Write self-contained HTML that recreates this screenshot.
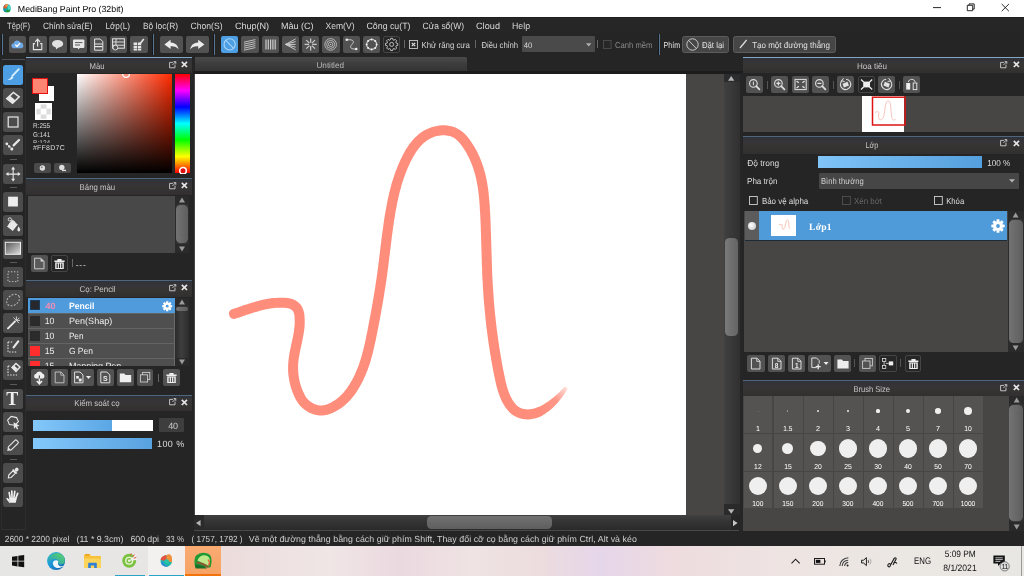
<!DOCTYPE html>
<html lang="vi"><head><meta charset="utf-8"><title>MediBang Paint Pro (32bit)</title>
<style>
*{box-sizing:border-box;margin:0;padding:0}
html,body{width:1024px;height:576px;overflow:hidden;background:#252525}
body{position:relative;font-family:"Liberation Sans",sans-serif;font-size:9px;color:#ddd}
div,svg{position:absolute;display:block}
svg{overflow:visible}
svg{will-change:transform}
svg.t text{white-space:pre;text-rendering:geometricPrecision}

.b{background:#525252;border-radius:2px}
.bd{background:#262626;border-radius:2px;border:1px solid #454545}

.pt{background:linear-gradient(#2e3238 0,#343438 3px,#373434 8px,#312f2f 100%);border-top:1px solid #4e667e}
.pt.hi{border-top-color:#84a6c2}

</style></head><body>
<div style="left:0px;top:0px;width:1024px;height:17px;background:#ffffff;"></div>
<svg style="left:3.3px;top:3.7px;" width="8" height="8.6" viewBox="0 0 8 8.6"><defs><clipPath id="ic"><ellipse cx="4" cy="4.400" rx="3.700" ry="4.100"/></clipPath></defs>
<g clip-path="url(#ic)"><rect width="8" height="8.600" fill="#14b09c"/>
<path d="M0 0h5.200L3.600 4.600H0z" fill="#d85a34"/><path d="M2.600 0h3l-1 2.400l-2.600.4z" fill="#f09a50"/>
<path d="M4.400 1.600h3.600v4L5 5.400z" fill="#4ad8cc"/>
<path d="M1.600 6.600L5 5.800l3 1v1.800H1.600z" fill="#1f9a3c"/>
<path d="M0 4.400l2.400.6l.4 2.600L0 8.600z" fill="#1a8fb4"/></g></svg>
<svg class="t" style="left:17px;top:12px;" width="1" height="1"><text x="0.8" y="0" font-family="Liberation Sans,sans-serif" font-size="8.8" letter-spacing="0.002" fill="#000">MediBang Paint Pro (32bit)</text></svg>
<svg style="left:928px;top:0px;" width="96" height="17" viewBox="0 0 96 17"><g stroke="#111" stroke-width="0.9" fill="none">
<path d="M5 7.6H13"/>
<path d="M39.3 5.3h5.4v5.4h-5.4z"/><path d="M41 5.3V3.9h5.2v5.2h-1.5"/>
<path d="M73.7 4l7.2 7.2M80.9 4l-7.2 7.2"/></g></svg>
<div style="left:0px;top:17px;width:1024px;height:16px;background:#262626;"></div>
<div style="left:0px;top:17px;width:1024px;height:1px;background:#1f1f1f;"></div>
<svg class="t" style="left:7px;top:29px;" width="1" height="1"><text x="0.1" y="0" font-family="Liberation Sans,sans-serif" font-size="9.1" textLength="22.9" lengthAdjust="spacingAndGlyphs" fill="#d8d8d8">Tệp(F)</text></svg>
<svg class="t" style="left:43px;top:29px;" width="1" height="1"><text x="0.1" y="0" font-family="Liberation Sans,sans-serif" font-size="9.1" textLength="49.4" lengthAdjust="spacingAndGlyphs" fill="#d8d8d8">Chỉnh sửa(E)</text></svg>
<svg class="t" style="left:105px;top:29px;" width="1" height="1"><text x="0.4" y="0" font-family="Liberation Sans,sans-serif" font-size="9.1" textLength="24.6" lengthAdjust="spacingAndGlyphs" fill="#d8d8d8">Lớp(L)</text></svg>
<svg class="t" style="left:143px;top:29px;" width="1" height="1"><text x="0" y="0" font-family="Liberation Sans,sans-serif" font-size="9.1" textLength="35" lengthAdjust="spacingAndGlyphs" fill="#d8d8d8">Bộ lọc(R)</text></svg>
<svg class="t" style="left:190px;top:29px;" width="1" height="1"><text x="0.5" y="0" font-family="Liberation Sans,sans-serif" font-size="9.1" textLength="32" lengthAdjust="spacingAndGlyphs" fill="#d8d8d8">Chọn(S)</text></svg>
<svg class="t" style="left:235px;top:29px;" width="1" height="1"><text x="0" y="0" font-family="Liberation Sans,sans-serif" font-size="9.1" letter-spacing="-0.065" fill="#d8d8d8">Chụp(N)</text></svg>
<svg class="t" style="left:281px;top:29px;" width="1" height="1"><text x="0" y="0" font-family="Liberation Sans,sans-serif" font-size="9.1" letter-spacing="-0.061" fill="#d8d8d8">Màu (C)</text></svg>
<svg class="t" style="left:325px;top:29px;" width="1" height="1"><text x="0.5" y="0" font-family="Liberation Sans,sans-serif" font-size="9.1" textLength="29" lengthAdjust="spacingAndGlyphs" fill="#d8d8d8">Xem(V)</text></svg>
<svg class="t" style="left:366px;top:29px;" width="1" height="1"><text x="0.5" y="0" font-family="Liberation Sans,sans-serif" font-size="9.1" textLength="44" lengthAdjust="spacingAndGlyphs" fill="#d8d8d8">Công cụ(T)</text></svg>
<svg class="t" style="left:422px;top:29px;" width="1" height="1"><text x="0.5" y="0" font-family="Liberation Sans,sans-serif" font-size="9.1" textLength="41.5" lengthAdjust="spacingAndGlyphs" fill="#d8d8d8">Cửa sổ(W)</text></svg>
<svg class="t" style="left:476px;top:29px;" width="1" height="1"><text x="0" y="0" font-family="Liberation Sans,sans-serif" font-size="9.1" letter-spacing="0.056" fill="#d8d8d8">Cloud</text></svg>
<svg class="t" style="left:512px;top:29px;" width="1" height="1"><text x="0" y="0" font-family="Liberation Sans,sans-serif" font-size="9.1" textLength="18" lengthAdjust="spacingAndGlyphs" fill="#d8d8d8">Help</text></svg>
<div style="left:0px;top:33px;width:1024px;height:24px;background:#252525;"></div>
<div style="left:1px;top:33.5px;width:1.2px;height:21.5px;background:#15191d;"></div>
<div style="left:2.2px;top:33.5px;width:1px;height:21.5px;background:#58748e;"></div>
<div style="left:152.1px;top:33.5px;width:1.2px;height:21.5px;background:#15191d;"></div>
<div style="left:153.3px;top:33.5px;width:1px;height:21.5px;background:#58748e;"></div>
<div style="left:213px;top:33.5px;width:1.2px;height:21.5px;background:#15191d;"></div>
<div style="left:214.2px;top:33.5px;width:1px;height:21.5px;background:#58748e;"></div>
<div style="left:658px;top:33.5px;width:1.2px;height:21.5px;background:#15191d;"></div>
<div style="left:659.2px;top:33.5px;width:1px;height:21.5px;background:#58748e;"></div>
<div class="b" style="left:9px;top:36.2px;width:17.3px;height:16.8px;"></div>
<svg style="left:9px;top:36.2px;" width="17.3" height="16.8" viewBox="0 0 17.3 16.8"><path d="M4.3 12.3a2.6 2.6 0 0 1 .3-5.1a3.6 3.6 0 0 1 6.8-.6a3 3 0 0 1 1.3 5.7z" fill="#6fa9e6"/><path d="M6.3 8.8l1.7 1.7l3-3.4" stroke="#fff" stroke-width="1.3" fill="none"/></svg>
<div class="b" style="left:29.23px;top:36.2px;width:17.3px;height:16.8px;"></div>
<svg style="left:29.23px;top:36.2px;" width="17.3" height="16.8" viewBox="0 0 17.3 16.8"><path d="M6 7.6H4.4v6h8.4v-6H11.2" stroke="#e6e6e6" fill="none" stroke-width="1.1"/><path d="M8.6 10.6V3.6M6.2 5.8l2.4-2.6l2.4 2.6" stroke="#e6e6e6" fill="none" stroke-width="1.2"/></svg>
<div class="b" style="left:49.46px;top:36.2px;width:17.3px;height:16.8px;"></div>
<svg style="left:49.46px;top:36.2px;" width="17.3" height="16.8" viewBox="0 0 17.3 16.8"><ellipse cx="8.6" cy="7.8" rx="5.6" ry="3.9" fill="#e2e2e2"/><path d="M6.6 10.6l.6 3l2.6-2.6z" fill="#e2e2e2"/></svg>
<div class="b" style="left:69.69px;top:36.2px;width:17.3px;height:16.8px;"></div>
<svg style="left:69.69px;top:36.2px;" width="17.3" height="16.8" viewBox="0 0 17.3 16.8"><rect x="3" y="3.6" width="11.4" height="8.4" rx="1" fill="#e6e6e6"/><path d="M7.6 12l1 1.6l1-1.6z" fill="#e6e6e6"/><path d="M5 6.6h7.4M5 9h5" stroke="#555" stroke-width="1"/></svg>
<div class="b" style="left:89.92px;top:36.2px;width:17.3px;height:16.8px;"></div>
<svg style="left:89.92px;top:36.2px;" width="17.3" height="16.8" viewBox="0 0 17.3 16.8"><path d="M4.6 3h5.6l2.6 2.6v8.6H4.6z" stroke="#e6e6e6" fill="none" stroke-width="1"/><path d="M5 8h7.4M5 10.6h7.4" stroke="#e6e6e6" fill="none" stroke-width="1.2"/></svg>
<div class="b" style="left:110.15px;top:36.2px;width:17.3px;height:16.8px;"></div>
<svg style="left:110.15px;top:36.2px;" width="17.3" height="16.8" viewBox="0 0 17.3 16.8"><rect x="2.6" y="2.8" width="11.8" height="9.4" stroke="#e6e6e6" fill="none" stroke-width="1"/><path d="M2.6 6h11.8M2.6 9.2h11.8M6 2.8V9" stroke="#e6e6e6" fill="none" stroke-width=".9"/><circle cx="5.4" cy="11.6" r="2.4" fill="#525252" stroke="#e6e6e6" stroke-width=".9"/></svg>
<div class="b" style="left:130.38px;top:36.2px;width:17.3px;height:16.8px;"></div>
<svg style="left:130.38px;top:36.2px;" width="17.3" height="16.8" viewBox="0 0 17.3 16.8"><path d="M3.6 6.4h3.4v2.6H3.6zM7.8 6.4h3.4v2.6H7.8zM3.6 9.8h3.4v2.6H3.6zM7.8 9.8h3.4v2.6H7.8zM3.6 13h3.4v1.6H3.6zM7.8 13h3.4v1.6H7.8z" fill="#e6e6e6"/><path d="M10.2 7.4l3.6-4.4" stroke="#e6e6e6" stroke-width="1.6"/></svg>
<div class="b" style="left:160px;top:36.2px;width:22.8px;height:16.8px;"></div>
<svg style="left:160px;top:36.2px;" width="22.8" height="16.8" viewBox="0 0 22.8 16.8"><path d="M4.4 8.4l6.2-4.6v2.6c5.4.4 7.6 3.6 8 7c-1.8-2.6-4.2-3.4-8-3.2v2.8z" fill="#ededed"/></svg>
<div class="b" style="left:186.3px;top:36.2px;width:22.8px;height:16.8px;"></div>
<svg style="left:186.3px;top:36.2px;" width="22.8" height="16.8" viewBox="0 0 22.8 16.8"><path d="M18.4 8.4l-6.2-4.6v2.6c-5.4.4-7.6 3.6-8 7c1.8-2.6 4.2-3.4 8-3.2v2.8z" fill="#ededed"/></svg>
<div class="b" style="left:221px;top:36.2px;width:17.3px;height:16.8px;background:#4d9ee3"></div>
<svg style="left:221px;top:36.2px;" width="17.3" height="16.8" viewBox="0 0 17.3 16.8"><circle cx="8.65" cy="8.4" r="5.6" stroke="#a8d4fa" stroke-width="1.1" fill="none"/><path d="M4.8 4.4l7.8 8" stroke="#a8d4fa" stroke-width="1.1"/></svg>
<div class="b" style="left:241.25px;top:36.2px;width:17.3px;height:16.8px;"></div>
<svg style="left:241.25px;top:36.2px;" width="17.3" height="16.8" viewBox="0 0 17.3 16.8"><path d="M3 6.2l11.4-2.6M3 8.2l11.4-2.6M3 10.2l11.4-2.6M3 12.2l11.4-2.6M3 14.2l11.4-2.6" stroke="#cccccc" fill="none" stroke-width=".9"/></svg>
<div class="b" style="left:261.5px;top:36.2px;width:17.3px;height:16.8px;"></div>
<svg style="left:261.5px;top:36.2px;" width="17.3" height="16.8" viewBox="0 0 17.3 16.8"><path d="M4 3.6v10M6.3 3.6v10M8.6 3.6v10M10.9 3.6v10M13.2 3.6v10" stroke="#cccccc" fill="none" stroke-width="1.2"/></svg>
<div class="b" style="left:281.75px;top:36.2px;width:17.3px;height:16.8px;"></div>
<svg style="left:281.75px;top:36.2px;" width="17.3" height="16.8" viewBox="0 0 17.3 16.8"><path d="M3.6 8.4L13.6 3M3.6 8.4L13.6 5.6M3.6 8.4h10M3.6 8.4L13.6 11.2M3.6 8.4L13.6 13.8" stroke="#cccccc" fill="none" stroke-width="1"/></svg>
<div class="b" style="left:302px;top:36.2px;width:17.3px;height:16.8px;"></div>
<svg style="left:302px;top:36.2px;" width="17.3" height="16.8" viewBox="0 0 17.3 16.8"><path d="M8.65 2.400v4.400M8.65 10v4.400M2.600 8.400h4.400M10.300 8.400h4.400M4.300 4.100l3.100 3.100M9.900 9.600l3.100 3.100M13 4.100l-3.100 3.100M7.400 9.600l-3.100 3.100" stroke="#cccccc" fill="none" stroke-width="1.200"/></svg>
<div class="b" style="left:322.25px;top:36.2px;width:17.3px;height:16.8px;"></div>
<svg style="left:322.25px;top:36.2px;" width="17.3" height="16.8" viewBox="0 0 17.3 16.8"><circle cx="8.65" cy="8.4" r="5.8" stroke="#cccccc" fill="none" stroke-width=".8"/><circle cx="8.65" cy="8.4" r="4" stroke="#cccccc" fill="none" stroke-width=".8"/><circle cx="8.65" cy="8.4" r="2.2" stroke="#cccccc" fill="none" stroke-width=".8"/><circle cx="8.65" cy="8.4" r=".6" fill="#d4d4d4"/></svg>
<div class="b" style="left:342.5px;top:36.2px;width:17.3px;height:16.8px;"></div>
<svg style="left:342.5px;top:36.2px;" width="17.3" height="16.8" viewBox="0 0 17.3 16.8"><path d="M4 3.8c6-.6 8 1.6 5 4.600c-3 3-1 5 4 4.600" stroke="#cccccc" fill="none" stroke-width="1"/><circle cx="3.8" cy="3.8" r="1.3" fill="#eee"/><circle cx="13.2" cy="13" r="1.3" fill="#eee"/></svg>
<div class="b" style="left:362.75px;top:36.2px;width:17.3px;height:16.8px;"></div>
<svg style="left:362.75px;top:36.2px;" width="17.3" height="16.8" viewBox="0 0 17.3 16.8"><circle cx="8.65" cy="8.4" r="5" stroke="#cccccc" fill="none" stroke-width="1.1"/><g fill="#eee"><circle cx="8.65" cy="3.4" r="1"/><circle cx="8.65" cy="13.4" r="1"/><circle cx="3.65" cy="8.4" r="1"/><circle cx="13.65" cy="8.4" r="1"/><circle cx="5.1" cy="4.9" r="1"/><circle cx="12.2" cy="4.9" r="1"/><circle cx="5.1" cy="11.9" r="1"/><circle cx="12.2" cy="11.9" r="1"/></g></svg>
<div class="bd" style="left:383px;top:36.2px;width:17.3px;height:16.8px;"></div>
<svg style="left:383px;top:36.2px;" width="17.3" height="16.8" viewBox="0 0 17.3 16.8"><path d="M13.15 7.04L14.77 7.43L14.77 9.37L13.15 9.76L12.80 10.62L13.67 12.04L12.29 13.42L10.87 12.55L10.01 12.90L9.62 14.52L7.68 14.52L7.29 12.90L6.43 12.55L5.01 13.42L3.63 12.04L4.50 10.62L4.15 9.76L2.53 9.37L2.53 7.43L4.15 7.04L4.50 6.18L3.63 4.76L5.01 3.38L6.43 4.25L7.29 3.90L7.68 2.28L9.62 2.28L10.01 3.90L10.87 4.25L12.29 3.38L13.67 4.76L12.80 6.18Z" stroke="#cfcfcf" stroke-width=".9" fill="none" stroke-linejoin="round"/><circle cx="8.65" cy="8.4" r="2" stroke="#cfcfcf" stroke-width=".9" fill="none"/></svg>
<div style="left:404.2px;top:40.4px;width:0.9px;height:8px;background:#666;"></div>
<div style="left:475.4px;top:40.4px;width:0.9px;height:8px;background:#666;"></div>
<div style="left:597.4px;top:40.4px;width:0.9px;height:8px;background:#666;"></div>
<svg style="left:409px;top:40.3px;" width="9" height="9" viewBox="0 0 9 9"><rect x=".5" y=".5" width="8" height="8" fill="#2a2a2a" stroke="#c8c8c8" stroke-width=".9"/><path d="M2.8 2.8l3.4 3.4M6.2 2.8L2.8 6.200" stroke="#e4e4e4" stroke-width="1.1"/></svg>
<svg class="t" style="left:421px;top:48px;" width="1" height="1"><text x="0.5" y="0" font-family="Liberation Sans,sans-serif" font-size="8.6" textLength="48.5" lengthAdjust="spacingAndGlyphs" fill="#d4d4d4">Khử răng cưa</text></svg>
<svg class="t" style="left:481px;top:48px;" width="1" height="1"><text x="0.5" y="0" font-family="Liberation Sans,sans-serif" font-size="8.6" textLength="36.5" lengthAdjust="spacingAndGlyphs" fill="#d4d4d4">Điều chỉnh</text></svg>
<div style="left:522px;top:36.2px;width:73.2px;height:16px;background:#4a4a4a;border-radius:1px"></div>
<svg class="t" style="left:523px;top:48px;" width="1" height="1"><text x="0.7" y="0" font-family="Liberation Sans,sans-serif" font-size="8" textLength="8.6" lengthAdjust="spacingAndGlyphs" fill="#ddd">40</text></svg>
<svg style="left:586.2px;top:42.8px;" width="5.4" height="3.6" viewBox="0 0 5.4 3.6"><path d="M0 .2h5.400L2.700 3.400z" fill="#b0b0b0"/></svg>
<svg style="left:602.5px;top:40.3px;" width="9" height="9" viewBox="0 0 9 9"><rect x=".5" y=".5" width="7.6" height="8" fill="#272727" stroke="#4e4e4e" stroke-width=".9"/></svg>
<svg class="t" style="left:615px;top:48px;" width="1" height="1"><text x="0" y="0" font-family="Liberation Sans,sans-serif" font-size="8.6" textLength="37.5" lengthAdjust="spacingAndGlyphs" fill="#8a8a8a">Canh mềm</text></svg>
<svg class="t" style="left:663px;top:48px;" width="1" height="1"><text x="0.6" y="0" font-family="Liberation Sans,sans-serif" font-size="8.6" textLength="16.4" lengthAdjust="spacingAndGlyphs" fill="#e6e6e6">Phím</text></svg>
<div style="left:682.3px;top:36px;width:47.2px;height:17.2px;background:#464646;border:1px solid #5c5c5c;border-radius:2.500px"></div>
<svg style="left:686px;top:38.2px;" width="13" height="13" viewBox="0 0 13 13"><circle cx="6.5" cy="6.5" r="5.7" stroke="#d8d8d8" stroke-width=".9" fill="none"/><path d="M2.600 2.400l7.800 8.200" stroke="#d8d8d8" stroke-width=".9"/></svg>
<svg class="t" style="left:701px;top:48px;" width="1" height="1"><text x="0.9" y="0" font-family="Liberation Sans,sans-serif" font-size="8.6" textLength="22.1" lengthAdjust="spacingAndGlyphs" fill="#e0e0e0">Đặt lại</text></svg>
<div style="left:733px;top:36px;width:103px;height:17.2px;background:#464646;border:1px solid #5c5c5c;border-radius:2.500px"></div>
<svg style="left:739px;top:39px;" width="9" height="10" viewBox="0 0 9 10"><path d="M1 9L7.600 1" stroke="#e0e0e0" stroke-width="1.2"/></svg>
<svg class="t" style="left:752px;top:48px;" width="1" height="1"><text x="0.2" y="0" font-family="Liberation Sans,sans-serif" font-size="8.6" textLength="77.8" lengthAdjust="spacingAndGlyphs" fill="#e0e0e0">Tạo một đường thẳng</text></svg>
<div style="left:0px;top:57px;width:26px;height:474px;background:#252525;"></div>
<div style="left:2px;top:58.6px;width:23px;height:1px;background:#4a4f55;"></div>
<div style="left:0.5px;top:60px;width:1px;height:470px;background:#2c2c2c;"></div>
<div style="left:24.6px;top:60px;width:1px;height:470px;background:#2c2c2c;"></div>
<div style="left:0.5px;top:529.4px;width:25px;height:1px;background:#303030;"></div>
<div class="b" style="left:2.9px;top:65px;width:20.3px;height:20.2px;background:#4d9ee3;border-radius:2.500px"></div>
<svg style="left:2.9px;top:65px;" width="20.3" height="20.2" viewBox="0 0 20.3 20.2"><path d="M15.8 4.200L9.400 10.800" stroke="#d6efff" stroke-width="1.9" stroke-linecap="round"/><path d="M4.400 14.800c2.200-.2 3.200-2.200 4.400-3.800l1.800 1.600c-1.200 1.800-3.600 3.200-6.200 2.200z" fill="#d6efff"/></svg>
<div class="b" style="left:2.9px;top:88.3px;width:20.3px;height:20.2px;background:#4c4c4c;border-radius:2.500px"></div>
<svg style="left:2.9px;top:88.3px;" width="20.3" height="20.2" viewBox="0 0 20.3 20.2"><path d="M3.800 10.600l6.600-6.200l5.800 4.400l-6.600 6.400z" stroke="#e8e8e8" fill="none" stroke-width="1.5"/><path d="M4.200 11l3.200-3l5.200 4.400l-3 3z" fill="#e8e8e8"/></svg>
<div class="b" style="left:2.9px;top:111.8px;width:20.3px;height:20.2px;background:#4c4c4c;border-radius:2.500px"></div>
<svg style="left:2.9px;top:111.8px;" width="20.3" height="20.2" viewBox="0 0 20.3 20.2"><rect x="5.200" y="5" width="9.800" height="10" stroke="#e8e8e8" fill="none" stroke-width="1.2"/></svg>
<div class="b" style="left:2.9px;top:135.2px;width:20.3px;height:20.2px;background:#4c4c4c;border-radius:2.500px"></div>
<svg style="left:2.9px;top:135.2px;" width="20.3" height="20.2" viewBox="0 0 20.3 20.2"><path d="M16 5L10.600 10.400" stroke="#e8e8e8" stroke-width="2.200" stroke-linecap="round"/><path d="M3.600 8.800l5 5" stroke="#ccc" stroke-width=".8"/><circle cx="3.800" cy="8.800" r="1.400" fill="#e8e8e8"/><circle cx="6.200" cy="11.400" r="1.200" fill="#e8e8e8"/><circle cx="8.800" cy="14" r="1.500" fill="#e8e8e8"/></svg>
<div class="b" style="left:2.9px;top:163.7px;width:20.3px;height:20.2px;background:#4c4c4c;border-radius:2.500px"></div>
<svg style="left:2.9px;top:163.7px;" width="20.3" height="20.2" viewBox="0 0 20.3 20.2"><path d="M10.150 4v12.200M4 10.100h12.300" stroke="#e8e8e8" fill="none" stroke-width="1.100"/><path d="M10.150 2.600l2 2.800h-4zM10.150 17.600l2-2.800h-4zM2.700 10.100l2.800-2v4zM17.600 10.100l-2.800-2v4z" fill="#e8e8e8"/></svg>
<div class="b" style="left:2.9px;top:192.2px;width:20.3px;height:20.2px;background:#4c4c4c;border-radius:2.500px"></div>
<svg style="left:2.9px;top:192.2px;" width="20.3" height="20.2" viewBox="0 0 20.3 20.2"><rect x="5.100" y="4.700" width="9.800" height="9.800" fill="#ededed"/></svg>
<div class="b" style="left:2.9px;top:215.4px;width:20.3px;height:20.2px;background:#4c4c4c;border-radius:2.500px"></div>
<svg style="left:2.9px;top:215.4px;" width="20.3" height="20.2" viewBox="0 0 20.3 20.2"><path d="M4 11.600l5.400-6.400l5.400 4.400l-5 6.400z" fill="#e8e8e8"/><path d="M5.800 9.600l3.400-4.600l3.200 2.400" stroke="#e8e8e8" fill="none" stroke-width="1"/><circle cx="6.800" cy="4.400" r="1.600" stroke="#e8e8e8" fill="none" stroke-width=".9"/><path d="M15.600 11.200c1 1.600 1.600 2.800 1.600 3.800a1.400 1.400 0 0 1-2.800 0c0-1 .4-2.200 1.200-3.800z" fill="#e8e8e8"/></svg>
<div class="b" style="left:2.9px;top:238.9px;width:20.3px;height:20.2px;background:#4c4c4c;border-radius:2.500px"></div>
<svg style="left:2.9px;top:238.9px;" width="20.3" height="20.2" viewBox="0 0 20.3 20.2"><defs><linearGradient id="lg1" x1="0" y1="0" x2="1" y2="1"><stop offset="0" stop-color="#555"/><stop offset="1" stop-color="#ddd"/></linearGradient></defs><rect x="2.300" y="3.300" width="15.200" height="12" fill="url(#lg1)" stroke="#eee" stroke-width="1"/></svg>
<div class="b" style="left:2.9px;top:267.2px;width:20.3px;height:20.2px;background:#4c4c4c;border-radius:2.500px"></div>
<svg style="left:2.9px;top:267.2px;" width="20.3" height="20.2" viewBox="0 0 20.3 20.2"><rect x="5" y="4.800" width="9.800" height="9.800" stroke="#bdbdbd" fill="none" stroke-width="1" stroke-dasharray="1.400 1.600"/></svg>
<div class="b" style="left:2.9px;top:290.1px;width:20.3px;height:20.2px;background:#4c4c4c;border-radius:2.500px"></div>
<svg style="left:2.9px;top:290.1px;" width="20.3" height="20.2" viewBox="0 0 20.3 20.2"><ellipse cx="10.100" cy="10.100" rx="7" ry="5" transform="rotate(-35 10.100 10.100)" stroke="#bdbdbd" fill="none" stroke-width="1" stroke-dasharray="1.800 1.500"/></svg>
<div class="b" style="left:2.9px;top:313.2px;width:20.3px;height:20.2px;background:#4c4c4c;border-radius:2.500px"></div>
<svg style="left:2.9px;top:313.2px;" width="20.3" height="20.2" viewBox="0 0 20.3 20.2"><path d="M5 15.400l7-7" stroke="#e8e8e8" stroke-width="2" stroke-linecap="round"/><path d="M13.400 7.400v-4M13.400 7.400l3-2.600M13.400 7.400h3.600M13.400 7.400l2.600 2.800M13.400 7.400l-3-2.800" stroke="#e8e8e8" stroke-width=".8"/></svg>
<div class="b" style="left:2.9px;top:336.9px;width:20.3px;height:20.2px;background:#4c4c4c;border-radius:2.500px"></div>
<svg style="left:2.9px;top:336.9px;" width="20.3" height="20.2" viewBox="0 0 20.3 20.2"><path d="M15.200 4.400L10.600 10.400" stroke="#e8e8e8" stroke-width="2.200" stroke-linecap="round"/><path d="M5 5v10h9" stroke="#e8e8e8" fill="none" stroke-width="1.100" stroke-dasharray="1.400 1.400"/><path d="M5 5h5" stroke="#e8e8e8" fill="none" stroke-width="1.100" stroke-dasharray="1.400 1.400"/></svg>
<div class="b" style="left:2.9px;top:360.1px;width:20.3px;height:20.2px;background:#4c4c4c;border-radius:2.500px"></div>
<svg style="left:2.9px;top:360.1px;" width="20.3" height="20.2" viewBox="0 0 20.3 20.2"><path d="M9 7.400l4-4l4 3.600l-4 4.400z" stroke="#e8e8e8" fill="none" stroke-width="1.400"/><path d="M9.200 7.800l2.400-2l3 3l-2 2z" fill="#e8e8e8"/><path d="M5 6v9h9" stroke="#e8e8e8" fill="none" stroke-width="1.100" stroke-dasharray="1.400 1.400"/><path d="M5 6h3" stroke="#e8e8e8" fill="none" stroke-width="1.100" stroke-dasharray="1.400 1.400"/></svg>
<div class="b" style="left:2.9px;top:388.5px;width:20.3px;height:20.2px;background:#4c4c4c;border-radius:2.500px"></div>
<svg style="left:2.9px;top:388.5px;" width="20.3" height="20.2" viewBox="0 0 20.3 20.2"><text x="9.300" y="15.600" font-family="Liberation Serif,serif" font-size="18" font-weight="bold" fill="#efefef" text-anchor="middle">T</text></svg>
<div class="b" style="left:2.9px;top:411.8px;width:20.3px;height:20.2px;background:#4c4c4c;border-radius:2.500px"></div>
<svg style="left:2.9px;top:411.8px;" width="20.3" height="20.2" viewBox="0 0 20.3 20.2"><path d="M4.600 8.200l3.600-3.800l5.400 1.200l1.800 4l-3.400 3.600l-5.600-.6z" stroke="#e8e8e8" fill="none" stroke-width="1.100"/><path d="M10.600 10.200l6 3.600l-2.600.6l1.200 2.400l-1.200.6l-1.200-2.400l-1.800 1.800z" fill="#e8e8e8"/></svg>
<div class="b" style="left:2.9px;top:435.2px;width:20.3px;height:20.2px;background:#4c4c4c;border-radius:2.500px"></div>
<svg style="left:2.9px;top:435.2px;" width="20.3" height="20.2" viewBox="0 0 20.3 20.2"><g transform="rotate(-45 10.150 10.100)"><rect x="4.600" y="8" width="11.400" height="4.200" rx="1.200" stroke="#e8e8e8" fill="none" stroke-width="1.100"/><path d="M4.600 8.200v3.800l-2.800-1.900z" fill="#e8e8e8"/></g></svg>
<div class="b" style="left:2.9px;top:463.3px;width:20.3px;height:20.2px;background:#4c4c4c;border-radius:2.500px"></div>
<svg style="left:2.9px;top:463.3px;" width="20.3" height="20.2" viewBox="0 0 20.3 20.2"><g transform="rotate(-45 10.150 10.100)"><path d="M3.400 10.100l2.200-1.700h6v3.400h-6z" stroke="#e8e8e8" fill="none" stroke-width="1.100"/><rect x="11.600" y="7.200" width="1.600" height="5.800" fill="#e8e8e8"/><rect x="13.200" y="8.400" width="3.800" height="3.400" rx="1.400" fill="#e8e8e8"/></g></svg>
<div class="b" style="left:2.9px;top:486.8px;width:20.3px;height:20.2px;background:#4c4c4c;border-radius:2.500px"></div>
<svg style="left:2.9px;top:486.8px;" width="20.3" height="20.2" viewBox="0 0 20.3 20.2"><path d="M7 16.400c-1.400-1.400-3-3.400-3.800-4.800l1-.8l2.200 1.800z" fill="#eee"/><path d="M6.600 15.800h6.200l1-4.800H6.200z" fill="#eee"/><g stroke="#eee" stroke-width="1.700" stroke-linecap="round"><path d="M7.200 11.400L6.200 5.600"/><path d="M9 10.800L8.800 4"/><path d="M10.900 10.800l.9-6.400"/><path d="M12.700 11.400l2-5"/></g></svg>
<div style="left:9.8px;top:158.8px;width:7.2px;height:1px;background:#5a5a5a;"></div>
<div style="left:9.8px;top:187.2px;width:7.2px;height:1px;background:#5a5a5a;"></div>
<div style="left:9.8px;top:262.1px;width:7.2px;height:1px;background:#5a5a5a;"></div>
<div style="left:9.8px;top:384px;width:7.2px;height:1px;background:#5a5a5a;"></div>
<div style="left:9.8px;top:458.5px;width:7.2px;height:1px;background:#5a5a5a;"></div>
<div style="left:26px;top:57px;width:167px;height:474px;background:#252525;"></div>
<div class="pt hi" style="left:26px;top:57px;width:166.2px;height:16.4px;"></div>
<svg class="t" style="left:89px;top:69px;" width="1" height="1"><text x="0.6" y="0" font-family="Liberation Sans,sans-serif" font-size="8.4" textLength="15" lengthAdjust="spacingAndGlyphs" fill="#c8c8c8">Màu</text></svg>
<svg style="left:168.6px;top:60.6px;" width="7.4" height="7.4" viewBox="0 0 7.4 7.4"><path d="M4 1.400H.600v5.400h5.400V3.600" stroke="#d0d0d0" stroke-width=".9" fill="none"/><path d="M3.400 4L6.600.800M4.600.600h2.200v2.200" stroke="#d0d0d0" stroke-width=".9" fill="none"/></svg>
<svg style="left:181.2px;top:61px;" width="6.8" height="6.8" viewBox="0 0 6.8 6.8"><path d="M.800.800l5.200 5.200M6 .800L.800 6" stroke="#e4e4e4" stroke-width="1.700"/></svg>
<div style="left:31.9px;top:78px;width:16.4px;height:16.4px;background:#ff8573;border:1.800px solid #e61010;z-index:2"></div>
<div style="left:39.2px;top:85.8px;width:15.2px;height:14.8px;background:#fff;"></div>
<div style="left:34.8px;top:103px;width:17.3px;height:17.3px;background:#fff;"></div>
<svg style="left:34.8px;top:103px;" width="17.3" height="17.3" viewBox="0 0 17.3 17.3"><g fill="#dcdcdc"><rect x="5.700" y="1.400" width="5.800" height="4.300"/><rect x="1.400" y="5.700" width="4.300" height="5.800"/><rect x="11.500" y="5.700" width="4.300" height="5.800"/><rect x="5.700" y="11.500" width="5.800" height="4.300"/></g></svg>
<svg class="t" style="left:33px;top:128px;" width="1" height="1"><text x="0" y="0" font-family="Liberation Sans,sans-serif" font-size="7" textLength="17.2" lengthAdjust="spacingAndGlyphs" fill="#ddd">R:255</text></svg>
<svg class="t" style="left:33px;top:137px;" width="1" height="1"><text x="0" y="0" font-family="Liberation Sans,sans-serif" font-size="7" textLength="17.2" lengthAdjust="spacingAndGlyphs" fill="#ddd">G:141</text></svg>
<div style="left:33px;top:139px;width:20px;height:4.400px;overflow:hidden">
<svg class="t" style="left:0px;top:6px;" width="1" height="1"><text x="0" y="0" font-family="Liberation Sans,sans-serif" font-size="7" textLength="17.2" lengthAdjust="spacingAndGlyphs" fill="#ccc">B:124</text></svg>
</div>
<svg class="t" style="left:33px;top:150px;" width="1" height="1"><text x="0" y="0" font-family="Liberation Sans,sans-serif" font-size="7" letter-spacing="0.226" fill="#ddd">#FF8D7C</text></svg>
<div style="left:33.9px;top:162.8px;width:17.2px;height:10px;background:#4a4a4a;border-radius:2px"></div>
<div style="left:54.2px;top:162.8px;width:16.9px;height:10px;background:#4a4a4a;border-radius:2px"></div>
<svg style="left:33.9px;top:162.8px;" width="17.2" height="10" viewBox="0 0 17.2 10"><circle cx="8.400" cy="5" r="2.700" fill="#ddd"/><circle cx="7.800" cy="4.400" r=".8" fill="#777"/></svg>
<svg style="left:54.2px;top:162.8px;" width="17" height="10" viewBox="0 0 17 10"><circle cx="7.800" cy="4.400" r="2.700" fill="#ddd"/><path d="M8 7.400h4" stroke="#ddd" stroke-width="1.400"/></svg>
<div style="left:77px;top:74px;width:95px;height:99.2px;background:linear-gradient(to bottom,rgba(0,0,0,0),#000),linear-gradient(to right,#fff,#ff2a00);"></div>
<div style="left:174.8px;top:74px;width:15.5px;height:99.4px;background:linear-gradient(to bottom,#ff0000 0,#ff00ff 16.670%,#0000ff 33.330%,#00ffff 50%,#00ff00 66.670%,#ffff00 83.330%,#ff0000 100%);"></div>
<svg style="left:120px;top:68px;clip-path:inset(6px 0 0 0)" width="12" height="12" viewBox="0 0 12 12"><circle cx="6" cy="6" r="3.400" stroke="#fff" stroke-width="1.300" fill="none"/></svg>
<svg style="left:176.5px;top:163.5px;clip-path:inset(0 0 2.200px 0)" width="12" height="12" viewBox="0 0 12 12"><circle cx="6" cy="6.800" r="3.300" stroke="#fff" stroke-width="1.600" fill="#e01010"/></svg>
<div class="pt" style="left:26px;top:178.2px;width:166.2px;height:16.4px;"></div>
<svg class="t" style="left:79px;top:190px;" width="1" height="1"><text x="0.6" y="0" font-family="Liberation Sans,sans-serif" font-size="8.4" textLength="35.6" lengthAdjust="spacingAndGlyphs" fill="#c8c8c8">Bảng màu</text></svg>
<svg style="left:168.6px;top:181.8px;" width="7.4" height="7.4" viewBox="0 0 7.4 7.4"><path d="M4 1.400H.600v5.400h5.400V3.600" stroke="#d0d0d0" stroke-width=".9" fill="none"/><path d="M3.400 4L6.600.800M4.600.600h2.200v2.200" stroke="#d0d0d0" stroke-width=".9" fill="none"/></svg>
<svg style="left:181.2px;top:182.2px;" width="6.8" height="6.8" viewBox="0 0 6.8 6.8"><path d="M.800.800l5.200 5.200M6 .800L.800 6" stroke="#e4e4e4" stroke-width="1.700"/></svg>
<div style="left:28px;top:195.6px;width:146.6px;height:57px;background:#484848;"></div>
<div style="left:175.2px;top:195.6px;width:14px;height:57px;background:linear-gradient(90deg,#2a2a2a,#3e3e3e 45%,#2c2c2c);"></div>
<div style="left:175.2px;top:195.6px;width:14px;height:8px;background:#2a2a2a;"></div>
<div style="left:175.2px;top:244px;width:14px;height:8.6px;background:#2a2a2a;"></div>
<svg style="left:175.2px;top:195.6px;" width="14" height="8" viewBox="0 0 14 8"><path d="M4 6.500h6l-3-5z" fill="#9a9a9a"/></svg>
<svg style="left:175.2px;top:244.6px;" width="14" height="8" viewBox="0 0 14 8"><path d="M4 1.500h6l-3 5z" fill="#9a9a9a"/></svg>
<div style="left:175.8px;top:205.2px;width:12.6px;height:38.2px;background:linear-gradient(90deg,#737373,#5e5e5e);border-radius:4.500px"></div>
<div class="b" style="left:31.1px;top:255.1px;width:16.9px;height:16.9px;"></div>
<svg style="left:31.1px;top:255.1px;" width="16.9" height="16.9" viewBox="0 0 16.9 16.9"><path d="M3.600 3.200h6.200l3.200 3.200v7.400H3.600z" stroke="#ccc" stroke-width="1" fill="#5a5a5a"/><path d="M9.600 3.200v3.400h3.400z" fill="#ddd"/></svg>
<div class="bd" style="left:51.1px;top:255.1px;width:16.9px;height:16.9px;"></div>
<svg style="left:51.1px;top:255.1px;" width="16.9" height="16.9" viewBox="0 0 16.9 16.9"><path d="M3.400 5.600h10.200v1.400H3.400zM6.400 4h4.200v1.600H6.400z" fill="#eee"/><path d="M4.200 7.400h8.600v6.600H4.200z" fill="#eee"/><path d="M6.200 8.400v4.600M8.500 8.400v4.600M10.800 8.400v4.600" stroke="#222" stroke-width="1.100"/></svg>
<div style="left:72px;top:259.4px;width:0.9px;height:8px;background:#666;"></div>
<svg class="t" style="left:75px;top:268px;" width="1" height="1"><text x="0.8" y="0" font-family="Liberation Sans,sans-serif" font-size="8.6" letter-spacing="0.704" fill="#ddd">---</text></svg>
<div class="pt" style="left:26px;top:280.4px;width:166.2px;height:16.4px;"></div>
<svg class="t" style="left:79px;top:292px;" width="1" height="1"><text x="0.6" y="0" font-family="Liberation Sans,sans-serif" font-size="8.4" textLength="36" lengthAdjust="spacingAndGlyphs" fill="#c8c8c8">Cọ: Pencil</text></svg>
<svg style="left:168.6px;top:284px;" width="7.4" height="7.4" viewBox="0 0 7.4 7.4"><path d="M4 1.400H.600v5.400h5.400V3.600" stroke="#d0d0d0" stroke-width=".9" fill="none"/><path d="M3.400 4L6.600.800M4.600.600h2.200v2.200" stroke="#d0d0d0" stroke-width=".9" fill="none"/></svg>
<svg style="left:181.2px;top:284.4px;" width="6.8" height="6.8" viewBox="0 0 6.8 6.8"><path d="M.800.800l5.200 5.200M6 .800L.800 6" stroke="#e4e4e4" stroke-width="1.700"/></svg>
<div style="left:28px;top:298px;width:147px;height:68.3px;background:#4f4f4f;"></div>
<div style="left:174.4px;top:298px;width:0.8px;height:68.3px;background:#6a6a6a;"></div>
<div style="left:28px;top:298px;width:146.800px;height:68.300px;overflow:hidden">
<div style="left:0px;top:0px;width:146.8px;height:15.1px;background:#4f9bdc;"></div>
<div style="left:2.2px;top:2.3px;width:10px;height:10px;background:#26282c;border:1px solid #1c3c5c"></div>
<svg class="t" style="left:17px;top:11px;" width="1" height="1"><text x="0.6" y="0" font-family="Liberation Sans,sans-serif" font-size="9" font-weight="bold" letter-spacing="-0.011" fill="#f08cb4">40</text></svg>
<svg class="t" style="left:40px;top:11px;" width="1" height="1"><text x="0.9" y="0" font-family="Liberation Sans,sans-serif" font-size="9" font-weight="bold" textLength="25.4" lengthAdjust="spacingAndGlyphs" fill="#fff">Pencil</text></svg>
<svg style="left:134px;top:3px;" width="10.4" height="10.4" viewBox="0 0 10.4 10.4"><path d="M8.47 3.95L10.20 4.21L10.20 6.19L8.47 6.45L8.40 6.63L9.44 8.04L8.04 9.44L6.63 8.40L6.45 8.47L6.19 10.20L4.21 10.20L3.95 8.47L3.77 8.40L2.36 9.44L0.96 8.04L2.00 6.63L1.93 6.45L0.20 6.19L0.20 4.21L1.93 3.95L2.00 3.77L0.96 2.36L2.36 0.96L3.77 2.00L3.95 1.93L4.21 0.20L6.19 0.20L6.45 1.93L6.63 2.00L8.04 0.96L9.44 2.36L8.40 3.77Z" fill="#fff"/><circle cx="5.200" cy="5.200" r="1.400" fill="#4f9bdc"/></svg>
<div style="left:0px;top:15.1px;width:146.8px;height:0.8px;background:#646464;"></div>
<div style="left:2.2px;top:17.6px;width:10px;height:10px;background:#2b2b2b;"></div>
<svg class="t" style="left:16px;top:26px;" width="1" height="1"><text x="0.8" y="0" font-family="Liberation Sans,sans-serif" font-size="9" textLength="9.6" lengthAdjust="spacingAndGlyphs" fill="#eee">10</text></svg>
<svg class="t" style="left:40px;top:26px;" width="1" height="1"><text x="0.9" y="0" font-family="Liberation Sans,sans-serif" font-size="9" letter-spacing="0.046" fill="#eee">Pen(Shap)</text></svg>
<div style="left:0px;top:30.2px;width:146.8px;height:0.8px;background:#646464;"></div>
<div style="left:2.2px;top:32.7px;width:10px;height:10px;background:#2b2b2b;"></div>
<svg class="t" style="left:16px;top:41px;" width="1" height="1"><text x="0.8" y="0" font-family="Liberation Sans,sans-serif" font-size="9" textLength="9.6" lengthAdjust="spacingAndGlyphs" fill="#eee">10</text></svg>
<svg class="t" style="left:40px;top:41px;" width="1" height="1"><text x="0.9" y="0" font-family="Liberation Sans,sans-serif" font-size="9" textLength="14.6" lengthAdjust="spacingAndGlyphs" fill="#eee">Pen</text></svg>
<div style="left:0px;top:45.3px;width:146.8px;height:0.8px;background:#646464;"></div>
<div style="left:2.2px;top:47.8px;width:10px;height:10px;background:#ff2d2d;"></div>
<svg class="t" style="left:16px;top:56px;" width="1" height="1"><text x="0.8" y="0" font-family="Liberation Sans,sans-serif" font-size="9" textLength="9.6" lengthAdjust="spacingAndGlyphs" fill="#eee">15</text></svg>
<svg class="t" style="left:40px;top:56px;" width="1" height="1"><text x="0.9" y="0" font-family="Liberation Sans,sans-serif" font-size="9" textLength="24" lengthAdjust="spacingAndGlyphs" fill="#eee">G Pen</text></svg>
<div style="left:0px;top:60.4px;width:146.8px;height:0.8px;background:#646464;"></div>
<div style="left:2.2px;top:62.9px;width:10px;height:10px;background:#ff2d2d;"></div>
<svg class="t" style="left:16px;top:71px;" width="1" height="1"><text x="0.8" y="0" font-family="Liberation Sans,sans-serif" font-size="9" textLength="9.6" lengthAdjust="spacingAndGlyphs" fill="#eee">15</text></svg>
<svg class="t" style="left:40px;top:71px;" width="1" height="1"><text x="0.9" y="0" font-family="Liberation Sans,sans-serif" font-size="9" letter-spacing="-0.064" fill="#eee">Mapping Pen</text></svg>
</div>
<div style="left:175.2px;top:298px;width:14px;height:68.3px;background:linear-gradient(90deg,#2a2a2a,#3e3e3e 45%,#2c2c2c);"></div>
<div style="left:175.2px;top:298px;width:14px;height:8px;background:#2a2a2a;"></div>
<div style="left:175.2px;top:357.7px;width:14px;height:8.6px;background:#2a2a2a;"></div>
<svg style="left:175.2px;top:298px;" width="14" height="8" viewBox="0 0 14 8"><path d="M4 6.500h6l-3-5z" fill="#9a9a9a"/></svg>
<svg style="left:175.2px;top:358.3px;" width="14" height="8" viewBox="0 0 14 8"><path d="M4 1.500h6l-3 5z" fill="#9a9a9a"/></svg>
<div style="left:175.8px;top:307.2px;width:12.6px;height:3.4px;background:linear-gradient(90deg,#737373,#5e5e5e);border-radius:4.500px"></div>
<div class="b" style="left:31.1px;top:369.2px;width:16.9px;height:16.8px;"></div>
<div class="b" style="left:51.1px;top:369.2px;width:16.9px;height:16.8px;"></div>
<div class="b" style="left:71.1px;top:369.2px;width:22.6px;height:16.8px;"></div>
<div class="b" style="left:97px;top:369.2px;width:16.8px;height:16.8px;"></div>
<div class="b" style="left:117px;top:369.2px;width:16.8px;height:16.8px;"></div>
<div class="b" style="left:137px;top:369.2px;width:16.2px;height:16.8px;"></div>
<div class="b" style="left:162.5px;top:369.2px;width:17px;height:16.8px;"></div>
<div style="left:157.8px;top:373.5px;width:0.9px;height:8px;background:#666;"></div>
<svg style="left:31.1px;top:369.2px;" width="16.9" height="16.8" viewBox="0 0 16.9 16.8"><path d="M4.600 9.400a2.400 2.400 0 0 1 .4-4.600a3.400 3.400 0 0 1 6.400-.2a2.600 2.600 0 0 1 .8 4.800z" fill="#eee"/><path d="M8.400 7.800v6.800M5.800 12l2.600 2.800l2.600-2.800" stroke="#eee" stroke-width="1.500" fill="none"/><path d="M8.400 6.600v3" stroke="#525252" stroke-width="1.200"/></svg>
<svg style="left:51.1px;top:369.2px;" width="16.9" height="16.8" viewBox="0 0 16.9 16.8"><path d="M4.200 3h5.800l3 3v7.800H4.200z" stroke="#cdcdcd" stroke-width=".85" fill="none"/><path d="M9.800 3v3.200h3.200" stroke="#cdcdcd" stroke-width=".8" fill="none"/></svg>
<svg style="left:71.1px;top:369.2px;" width="22.6" height="16.8" viewBox="0 0 22.6 16.8"><path d="M3.600 3h5.400l3 3v7.800H3.600z" stroke="#ddd" stroke-width="1" fill="none"/><rect x="5.200" y="7" width="2.600" height="2.600" fill="#eee"/><rect x="7.800" y="9.600" width="2.800" height="2.800" fill="#eee"/><path d="M15 7h5l-2.500 3z" fill="#eee"/></svg>
<svg style="left:97px;top:369.2px;" width="16.8" height="16.8" viewBox="0 0 16.8 16.8"><path d="M3.800 3h6l3 3v7.800h-9z" stroke="#ddd" stroke-width="1" fill="none"/><text x="8.400" y="12.400" font-size="7" font-family="Liberation Sans,sans-serif" font-weight="bold" fill="#eee" text-anchor="middle">S</text></svg>
<svg style="left:117px;top:369.2px;" width="16.8" height="16.8" viewBox="0 0 16.8 16.8"><path d="M2.800 4.400h4.400l1.400 1.600h5.600v7.200H2.800z" fill="#eee"/></svg>
<svg style="left:137px;top:369.2px;" width="16.2" height="16.8" viewBox="0 0 16.2 16.8"><rect x="5.600" y="3.400" width="7.200" height="7.200" stroke="#ccc" stroke-width=".9" fill="none"/><rect x="3.400" y="5.800" width="7.200" height="7.200" stroke="#ccc" stroke-width=".9" fill="#525252"/></svg>
<svg style="left:162.5px;top:369.2px;" width="17" height="16.8" viewBox="0 0 17 16.8"><path d="M3.400 5.600h10.200v1.400H3.400zM6.400 4h4.200v1.600H6.400z" fill="#eee"/><path d="M4.200 7.400h8.600v6.600H4.200z" fill="#eee"/><path d="M6.200 8.400v4.600M8.500 8.400v4.600M10.800 8.400v4.600" stroke="#525252" stroke-width="1.100"/></svg>
<div class="pt" style="left:26px;top:394.6px;width:166.2px;height:16.4px;"></div>
<svg class="t" style="left:74px;top:406px;" width="1" height="1"><text x="0.2" y="0" font-family="Liberation Sans,sans-serif" font-size="8.4" textLength="45.4" lengthAdjust="spacingAndGlyphs" fill="#c8c8c8">Kiểm soát cọ</text></svg>
<svg style="left:168.6px;top:398.2px;" width="7.4" height="7.4" viewBox="0 0 7.4 7.4"><path d="M4 1.400H.600v5.400h5.400V3.600" stroke="#d0d0d0" stroke-width=".9" fill="none"/><path d="M3.400 4L6.600.800M4.600.600h2.200v2.200" stroke="#d0d0d0" stroke-width=".9" fill="none"/></svg>
<svg style="left:181.2px;top:398.6px;" width="6.8" height="6.8" viewBox="0 0 6.8 6.8"><path d="M.800.800l5.200 5.200M6 .800L.800 6" stroke="#e4e4e4" stroke-width="1.700"/></svg>
<div style="left:33.2px;top:419.6px;width:119.8px;height:11px;background:linear-gradient(90deg,#84c8fa,#5ba6e4 65.500%,#fff 65.500%);"></div>
<div style="left:158.7px;top:417.6px;width:25.2px;height:14.8px;background:#3e3e3e;border-radius:1px"></div>
<svg class="t" style="left:168px;top:429px;" width="1" height="1"><text x="0.2" y="0" font-family="Liberation Sans,sans-serif" font-size="9" letter-spacing="-0.211" fill="#ccc">40</text></svg>
<div style="left:33.2px;top:438.2px;width:118.6px;height:11.3px;background:linear-gradient(90deg,#84c8fa,#58a2e0);"></div>
<svg class="t" style="left:157px;top:447px;" width="1" height="1"><text x="0" y="0" font-family="Liberation Sans,sans-serif" font-size="9" letter-spacing="0.420" fill="#ddd">100 %</text></svg>
<div style="left:738px;top:57px;width:286px;height:474px;background:#252525;"></div>
<div class="pt hi" style="left:743px;top:57px;width:281px;height:16.4px;"></div>
<svg class="t" style="left:857px;top:69px;" width="1" height="1"><text x="0" y="0" font-family="Liberation Sans,sans-serif" font-size="8.4" textLength="30" lengthAdjust="spacingAndGlyphs" fill="#c8c8c8">Hoa tiêu</text></svg>
<svg style="left:1000.4px;top:60.6px;" width="7.4" height="7.4" viewBox="0 0 7.4 7.4"><path d="M4 1.400H.600v5.400h5.400V3.600" stroke="#d0d0d0" stroke-width=".9" fill="none"/><path d="M3.400 4L6.600.800M4.600.600h2.200v2.200" stroke="#d0d0d0" stroke-width=".9" fill="none"/></svg>
<svg style="left:1013px;top:61px;" width="6.8" height="6.8" viewBox="0 0 6.8 6.8"><path d="M.800.800l5.200 5.200M6 .800L.800 6" stroke="#e4e4e4" stroke-width="1.700"/></svg>
<div style="left:743px;top:74px;width:281px;height:21.7px;background:#252525;"></div>
<div class="b" style="left:746px;top:76px;width:17.3px;height:17px;"></div>
<svg style="left:746px;top:76px;" width="17.3" height="17" viewBox="0 0 17.3 17"><circle cx="7.400" cy="7.400" r="3.800" stroke="#e0e0e0" fill="none" stroke-width="1.100"/><path d="M10.200 10.200l3.200 3.200" stroke="#e0e0e0" stroke-width="1.700" stroke-linecap="round"/><path d="M7.400 5.600v3.600" stroke="#e0e0e0" stroke-width="1"/></svg>
<div class="b" style="left:771px;top:76px;width:17.3px;height:17px;"></div>
<svg style="left:771px;top:76px;" width="17.3" height="17" viewBox="0 0 17.3 17"><circle cx="7.400" cy="7.400" r="3.800" stroke="#e0e0e0" fill="none" stroke-width="1.100"/><path d="M10.200 10.200l3.200 3.200" stroke="#e0e0e0" stroke-width="1.700" stroke-linecap="round"/><path d="M7.400 5.400v4M5.400 7.400h4" stroke="#e0e0e0" stroke-width="1.300"/></svg>
<div class="b" style="left:791.6px;top:76px;width:17.3px;height:17px;"></div>
<svg style="left:791.6px;top:76px;" width="17.3" height="17" viewBox="0 0 17.3 17"><rect x="3" y="3.400" width="11.200" height="10.200" stroke="#e0e0e0" fill="none" stroke-width="1"/><path d="M4.600 5l2.200 1.800M12.600 5l-2.200 1.800M4.600 12l2.200-1.800M12.600 12l-2.200-1.800" stroke="#e0e0e0" stroke-width="1.200"/></svg>
<div class="b" style="left:812px;top:76px;width:17.3px;height:17px;"></div>
<svg style="left:812px;top:76px;" width="17.3" height="17" viewBox="0 0 17.3 17"><circle cx="7.400" cy="7.400" r="3.800" stroke="#e0e0e0" fill="none" stroke-width="1.100"/><path d="M10.200 10.200l3.200 3.200" stroke="#e0e0e0" stroke-width="1.700" stroke-linecap="round"/><path d="M5.400 7.400h4" stroke="#e0e0e0" stroke-width="1.300"/></svg>
<div class="b" style="left:837.2px;top:76px;width:17.3px;height:17px;"></div>
<svg style="left:837.2px;top:76px;" width="17.3" height="17" viewBox="0 0 17.3 17"><path d="M5 4.600a5.200 5.200 0 1 0 4-1.400" stroke="#e0e0e0" fill="none" stroke-width="1.100"/><path d="M6.600 2.200L4.600 4.800l3 .8" stroke="#e0e0e0" fill="none" stroke-width="1"/><rect x="6" y="6.600" width="5.400" height="4" transform="rotate(-20 8.700 8.600)" fill="#e0e0e0"/></svg>
<div class="bd" style="left:857.6px;top:76px;width:17.3px;height:17px;"></div>
<svg style="left:857.6px;top:76px;" width="17.3" height="17" viewBox="0 0 17.3 17"><rect x="5.200" y="5.600" width="6.800" height="5.800" fill="#eee"/><path d="M3 3.600l2.600 2.400M14.200 3.600l-2.600 2.400M3 13.400l2.600-2.400M14.200 13.400l-2.600-2.400" stroke="#eee" stroke-width="1.300"/></svg>
<div class="b" style="left:878px;top:76px;width:17.3px;height:17px;"></div>
<svg style="left:878px;top:76px;" width="17.3" height="17" viewBox="0 0 17.3 17"><path d="M12.200 4.600a5.200 5.200 0 1 1-4-1.400" stroke="#e0e0e0" fill="none" stroke-width="1.100"/><path d="M10.600 2.200l2 2.600l-3 .8" stroke="#e0e0e0" fill="none" stroke-width="1"/><rect x="6" y="6.600" width="5.400" height="4" transform="rotate(20 8.700 8.600)" fill="#e0e0e0"/></svg>
<div class="b" style="left:903px;top:76px;width:17.3px;height:17px;"></div>
<svg style="left:903px;top:76px;" width="17.3" height="17" viewBox="0 0 17.3 17"><rect x="3.200" y="7" width="4" height="6.600" fill="#eee"/><rect x="10.200" y="7" width="3.600" height="6.600" stroke="#e0e0e0" fill="none" stroke-width="1"/><path d="M5.400 6c.6-3.600 6-3.600 6.800 0" stroke="#e0e0e0" fill="none" stroke-width="1"/></svg>
<div style="left:767px;top:80.5px;width:0.9px;height:8px;background:#555;"></div>
<div style="left:833px;top:80.5px;width:0.9px;height:8px;background:#555;"></div>
<div style="left:899px;top:80.5px;width:0.9px;height:8px;background:#555;"></div>
<div style="left:743px;top:95.7px;width:281px;height:36.4px;background:#484645;"></div>
<div style="left:862px;top:95.7px;width:42.2px;height:36.3px;background:#fff;"></div>
<svg style="left:862px;top:95.7px;" width="44" height="37" viewBox="862 95.700 44 37"><path d="M875.100 112c1.600-.6 3.400-1 3.700 0c.4 1.600-.6 3.200-.2 5.200c.4 1.800 1.400 2.600 2.400 2.400c2-.6 3.200-5 3.600-8c.4-3.400.8-8.400 2.200-10.200c1-1.200 2-1 2.800.2c1.200 2 1.200 6 1.500 9.600c.3 3.400.5 7.200 1.800 8.200c1 .6 2 .2 2.800-.6" fill="none" stroke="#f4b4ac" stroke-width=".8"/><rect x="872.500" y="96.900" width="32.600" height="27.800" fill="none" stroke="#dc1414" stroke-width="1.500"/></svg>
<div class="pt" style="left:743px;top:135.8px;width:281px;height:18px;"></div>
<svg class="t" style="left:865px;top:148px;" width="1" height="1"><text x="0.5" y="0" font-family="Liberation Sans,sans-serif" font-size="8.4" textLength="12.8" lengthAdjust="spacingAndGlyphs" fill="#c8c8c8">Lớp</text></svg>
<svg style="left:1000.4px;top:139.4px;" width="7.4" height="7.4" viewBox="0 0 7.4 7.4"><path d="M4 1.400H.600v5.400h5.400V3.600" stroke="#d0d0d0" stroke-width=".9" fill="none"/><path d="M3.400 4L6.600.800M4.600.600h2.200v2.200" stroke="#d0d0d0" stroke-width=".9" fill="none"/></svg>
<svg style="left:1013px;top:139.8px;" width="6.8" height="6.8" viewBox="0 0 6.8 6.8"><path d="M.800.800l5.200 5.200M6 .800L.800 6" stroke="#e4e4e4" stroke-width="1.700"/></svg>
<div style="left:743px;top:153.8px;width:281px;height:57.6px;background:#252525;"></div>
<svg class="t" style="left:747px;top:166px;" width="1" height="1"><text x="0.2" y="0" font-family="Liberation Sans,sans-serif" font-size="8.6" textLength="32" lengthAdjust="spacingAndGlyphs" fill="#ddd">Độ trong</text></svg>
<div style="left:818.1px;top:156.3px;width:163.9px;height:11.3px;background:linear-gradient(90deg,#80c4f8,#549fdd);"></div>
<svg class="t" style="left:987px;top:166px;" width="1" height="1"><text x="0.2" y="0" font-family="Liberation Sans,sans-serif" font-size="8.6" textLength="23.2" lengthAdjust="spacingAndGlyphs" fill="#ddd">100 %</text></svg>
<svg class="t" style="left:747px;top:184px;" width="1" height="1"><text x="0" y="0" font-family="Liberation Sans,sans-serif" font-size="8.6" textLength="30.5" lengthAdjust="spacingAndGlyphs" fill="#ddd">Pha trộn</text></svg>
<div style="left:818.5px;top:173.2px;width:200.6px;height:15.4px;background:#464646;border-radius:1px"></div>
<svg class="t" style="left:821px;top:184px;" width="1" height="1"><text x="0" y="0" font-family="Liberation Sans,sans-serif" font-size="8.6" textLength="42.8" lengthAdjust="spacingAndGlyphs" fill="#d0d0d0">Bình thường</text></svg>
<svg style="left:1009.4px;top:179.4px;" width="6" height="3.6" viewBox="0 0 6 3.6"><path d="M0 .2h6L3 3.400z" fill="#b4b4b4"/></svg>
<svg style="left:749.2px;top:196.4px;" width="9" height="9" viewBox="0 0 9 9"><rect x=".5" y=".5" width="7.800" height="8" fill="#252525" stroke="#d0d0d0" stroke-width=".9"/></svg>
<svg class="t" style="left:761px;top:204px;" width="1" height="1"><text x="0.9" y="0" font-family="Liberation Sans,sans-serif" font-size="8.6" textLength="46.4" lengthAdjust="spacingAndGlyphs" fill="#ddd">Bảo vệ alpha</text></svg>
<svg style="left:842px;top:196.4px;" width="9" height="9" viewBox="0 0 9 9"><rect x=".5" y=".5" width="7.800" height="8" fill="#252525" stroke="#525252" stroke-width=".9"/></svg>
<svg class="t" style="left:854px;top:204px;" width="1" height="1"><text x="0" y="0" font-family="Liberation Sans,sans-serif" font-size="8.6" textLength="28" lengthAdjust="spacingAndGlyphs" fill="#666">Xén bớt</text></svg>
<svg style="left:933.9px;top:196.4px;" width="9" height="9" viewBox="0 0 9 9"><rect x=".5" y=".5" width="7.800" height="8" fill="#252525" stroke="#d0d0d0" stroke-width=".9"/></svg>
<svg class="t" style="left:946px;top:204px;" width="1" height="1"><text x="0.2" y="0" font-family="Liberation Sans,sans-serif" font-size="8.6" textLength="18" lengthAdjust="spacingAndGlyphs" fill="#ddd">Khóa</text></svg>
<div style="left:744px;top:211.2px;width:264px;height:140.8px;background:#484645;"></div>
<div style="left:745px;top:211.2px;width:14.2px;height:28.8px;background:#5c5c5c;"></div>
<div style="left:759.2px;top:211.2px;width:247.9px;height:28.8px;background:#4f9bd9;"></div>
<div style="left:745px;top:239.8px;width:262px;height:0.8px;background:#1e2a36;"></div>
<svg style="left:747px;top:221px;" width="10" height="10" viewBox="0 0 10 10"><defs><radialGradient id="eg" cx=".4" cy=".4" r=".7"><stop offset="0" stop-color="#fff"/><stop offset="1" stop-color="#c8c8c8"/></radialGradient></defs><circle cx="5" cy="5" r="4" fill="url(#eg)"/></svg>
<div style="left:770.8px;top:215px;width:25.4px;height:21.3px;background:#fff;"></div>
<svg style="left:770.8px;top:215px;" width="25.4" height="21.3" viewBox="0 0 25.4 21.3"><path d="M8 9.800c1.400-.6 3-.8 3.200.2c.2 1.200-.4 2.400 0 3.600c.4 1 1.200 1 1.800.2c1.200-1.600 1.600-4.600 2-6.800c.3-1.600 1-2.400 1.700-2.200c.9.300 1 3 1.200 5c.2 1.800.3 3.600 1.100 4" fill="none" stroke="#f7b9a8" stroke-width=".8"/></svg>
<svg class="t" style="left:809px;top:230px;" width="1" height="1"><text x="0.1" y="0" font-family="Liberation Serif,serif" font-size="9.6" font-weight="bold" letter-spacing="0.214" fill="#fff">Lớp1</text></svg>
<svg style="left:990.6px;top:219.4px;" width="14" height="14" viewBox="0 0 14 14"><path d="M11.30 5.36L13.67 5.68L13.67 8.32L11.30 8.64L11.20 8.88L12.65 10.79L10.79 12.65L8.88 11.20L8.64 11.30L8.32 13.67L5.68 13.67L5.36 11.30L5.12 11.20L3.21 12.65L1.35 10.79L2.80 8.88L2.70 8.64L0.33 8.32L0.33 5.68L2.70 5.36L2.80 5.12L1.35 3.21L3.21 1.35L5.12 2.80L5.36 2.70L5.68 0.33L8.32 0.33L8.64 2.70L8.88 2.80L10.79 1.35L12.65 3.21L11.20 5.12Z" fill="#fff"/><circle cx="7" cy="7" r="1.900" fill="#4f9bd9"/></svg>
<div style="left:1008.4px;top:211.2px;width:15.2px;height:140.8px;background:linear-gradient(90deg,#2a2a2a,#3e3e3e 45%,#2c2c2c);"></div>
<div style="left:1008.4px;top:211.2px;width:15.2px;height:8px;background:#2a2a2a;"></div>
<div style="left:1008.4px;top:343.4px;width:15.2px;height:8.6px;background:#2a2a2a;"></div>
<svg style="left:1008.4px;top:211.2px;" width="15.2" height="8" viewBox="0 0 15.2 8"><path d="M4.6 6.500h6l-3-5z" fill="#9a9a9a"/></svg>
<svg style="left:1008.4px;top:344px;" width="15.2" height="8" viewBox="0 0 15.2 8"><path d="M4.6 1.500h6l-3 5z" fill="#9a9a9a"/></svg>
<div style="left:1009px;top:220px;width:13.8px;height:123.4px;background:linear-gradient(90deg,#737373,#5e5e5e);border-radius:4.500px"></div>
<div style="left:743px;top:352px;width:281px;height:28.6px;background:#252525;"></div>
<div class="b" style="left:747px;top:354.7px;width:18px;height:17.2px;"></div>
<div class="b" style="left:767.5px;top:354.7px;width:17.5px;height:17.2px;"></div>
<div class="b" style="left:787.9px;top:354.7px;width:17.2px;height:17.2px;"></div>
<div class="b" style="left:807.9px;top:354.7px;width:23.1px;height:17.2px;"></div>
<div class="b" style="left:833.5px;top:354.7px;width:17.5px;height:17.2px;"></div>
<div class="b" style="left:859.2px;top:354.7px;width:17px;height:17.2px;"></div>
<div class="bd" style="left:879.2px;top:354.7px;width:17.5px;height:17.2px;"></div>
<div class="bd" style="left:905px;top:354.7px;width:16.4px;height:17.2px;"></div>
<div style="left:854.2px;top:359px;width:0.9px;height:8px;background:#555;"></div>
<div style="left:900.3px;top:359px;width:0.9px;height:8px;background:#555;"></div>
<svg style="left:747px;top:354.7px;" width="18" height="17.2" viewBox="0 0 18 17.2"><path d="M4.400 3.200h5.600l3 3v7.800H4.400z" stroke="#ddd" stroke-width="1" fill="none"/><path d="M9.800 3.200v3.200h3.200" stroke="#ddd" stroke-width=".9" fill="none"/></svg>
<svg style="left:767.5px;top:354.7px;" width="17.5" height="17.2" viewBox="0 0 17.5 17.2"><path d="M4.400 3.200h5.600l3 3v7.800H4.400z" stroke="#ddd" stroke-width="1" fill="none"/><path d="M9.800 3.200v3.200h3.200" stroke="#ddd" stroke-width=".9" fill="none"/><text x="8.600" y="12.600" font-size="6.500" font-family="Liberation Sans,sans-serif" font-weight="bold" fill="#eee" text-anchor="middle">8</text></svg>
<svg style="left:787.9px;top:354.7px;" width="17.2" height="17.2" viewBox="0 0 17.2 17.2"><path d="M4.400 3.200h5.600l3 3v7.800H4.400z" stroke="#ddd" stroke-width="1" fill="none"/><path d="M9.800 3.200v3.200h3.200" stroke="#ddd" stroke-width=".9" fill="none"/><text x="8.800" y="12.800" font-size="6.500" font-family="Liberation Sans,sans-serif" font-weight="bold" fill="#eee" text-anchor="middle">1</text></svg>
<svg style="left:807.9px;top:354.7px;" width="23.1" height="17.2" viewBox="0 0 23.1 17.2"><path d="M3.800 3h4.800l2.600 2.600v3M8.600 12.600H3.800V3" stroke="#ddd" stroke-width="1" fill="none"/><path d="M10.200 9.200v5M7.700 11.700h5" stroke="#eee" stroke-width="1.300"/><path d="M15.600 7h5l-2.500 3z" fill="#eee"/></svg>
<svg style="left:833.5px;top:354.7px;" width="17.5" height="17.2" viewBox="0 0 17.5 17.2"><path d="M3.400 4.400h4.400l1.400 1.600h5.400v7.400H3.400z" fill="#eee"/></svg>
<svg style="left:859.2px;top:354.7px;" width="17" height="17.2" viewBox="0 0 17 17.2"><rect x="6" y="3.400" width="7.400" height="7.400" stroke="#ccc" stroke-width=".9" fill="none"/><rect x="3.600" y="6" width="7.400" height="7.400" stroke="#ccc" stroke-width=".9" fill="#525252"/></svg>
<svg style="left:879.2px;top:354.7px;" width="17.5" height="17.2" viewBox="0 0 17.5 17.2"><rect x="3.400" y="3.400" width="3.400" height="3" stroke="#ddd" stroke-width=".8" fill="none"/><rect x="3.400" y="10.400" width="3.400" height="3" stroke="#ddd" stroke-width=".8" fill="none"/><path d="M5.100 6.400v4M6.800 8.400h3" stroke="#ddd" stroke-width=".8"/><rect x="9.800" y="6.400" width="4.400" height="4" fill="#eee"/></svg>
<svg style="left:905px;top:354.7px;" width="16.4" height="17.2" viewBox="0 0 16.4 17.2"><path d="M3.200 5.600h10.200v1.400H3.400zM6.400 4h4.200v1.600H6.400z" fill="#eee"/><path d="M4.200 7.400h8.600v6.600H4.200z" fill="#eee"/><path d="M6.200 8.400v4.600M8.500 8.400v4.600M10.800 8.400v4.600" stroke="#222" stroke-width="1.100"/></svg>
<div class="pt" style="left:743px;top:380.4px;width:281px;height:16px;"></div>
<svg class="t" style="left:853px;top:392px;" width="1" height="1"><text x="0.4" y="0" font-family="Liberation Sans,sans-serif" font-size="8.4" textLength="36.6" lengthAdjust="spacingAndGlyphs" fill="#c8c8c8">Brush Size</text></svg>
<svg style="left:1000.4px;top:384px;" width="7.4" height="7.4" viewBox="0 0 7.4 7.4"><path d="M4 1.400H.600v5.400h5.400V3.600" stroke="#d0d0d0" stroke-width=".9" fill="none"/><path d="M3.400 4L6.600.800M4.600.600h2.200v2.200" stroke="#d0d0d0" stroke-width=".9" fill="none"/></svg>
<svg style="left:1013px;top:384.4px;" width="6.8" height="6.8" viewBox="0 0 6.8 6.8"><path d="M.800.800l5.200 5.200M6 .800L.800 6" stroke="#e4e4e4" stroke-width="1.700"/></svg>
<div style="left:743px;top:396.3px;width:281px;height:134.5px;background:#484645;"></div>
<div style="left:743.8px;top:396.3px;width:28.7px;height:36.6px;background:#555352;"></div>
<div style="left:757.5px;top:410.6px;width:0.8px;height:0.8px;background:#efefef;border-radius:50%;opacity:0.25"></div>
<svg class="t" style="left:755px;top:431px;" width="1" height="1"><text x="0.9" y="0" font-family="Liberation Sans,sans-serif" font-size="7.2" letter-spacing="0.000" fill="#fff">1</text></svg>
<div style="left:773.83px;top:396.3px;width:28.7px;height:36.6px;background:#555352;"></div>
<div style="left:787.31px;top:410.4px;width:1.2px;height:1.2px;background:#efefef;border-radius:50%;opacity:0.5"></div>
<svg class="t" style="left:783px;top:431px;" width="1" height="1"><text x="0.36" y="0" font-family="Liberation Sans,sans-serif" font-size="7.2" textLength="9.11" lengthAdjust="spacingAndGlyphs" fill="#fff">1.5</text></svg>
<div style="left:803.86px;top:396.3px;width:28.7px;height:36.6px;background:#555352;"></div>
<div style="left:817.07px;top:410.15px;width:1.7px;height:1.7px;background:#efefef;border-radius:50%;opacity:0.8"></div>
<svg class="t" style="left:815px;top:431px;" width="1" height="1"><text x="0.92" y="0" font-family="Liberation Sans,sans-serif" font-size="7.2" letter-spacing="0.000" fill="#fff">2</text></svg>
<div style="left:833.89px;top:396.3px;width:28.7px;height:36.6px;background:#555352;"></div>
<div style="left:846.78px;top:409.85px;width:2.3px;height:2.3px;background:#efefef;border-radius:50%;opacity:0.95"></div>
<svg class="t" style="left:845px;top:431px;" width="1" height="1"><text x="0.93" y="0" font-family="Liberation Sans,sans-serif" font-size="7.2" letter-spacing="0.000" fill="#fff">3</text></svg>
<div style="left:863.92px;top:396.3px;width:28.7px;height:36.6px;background:#555352;"></div>
<div style="left:876.34px;top:409.4px;width:3.2px;height:3.2px;background:#efefef;border-radius:50%;opacity:1"></div>
<svg class="t" style="left:875px;top:431px;" width="1" height="1"><text x="0.94" y="0" font-family="Liberation Sans,sans-serif" font-size="7.2" letter-spacing="0.000" fill="#fff">4</text></svg>
<div style="left:893.95px;top:396.3px;width:28.7px;height:36.6px;background:#555352;"></div>
<div style="left:905.95px;top:409px;width:4px;height:4px;background:#efefef;border-radius:50%;opacity:1"></div>
<svg class="t" style="left:905px;top:431px;" width="1" height="1"><text x="0.95" y="0" font-family="Liberation Sans,sans-serif" font-size="7.2" letter-spacing="0.000" fill="#fff">5</text></svg>
<div style="left:923.98px;top:396.3px;width:28.7px;height:36.6px;background:#555352;"></div>
<div style="left:935.16px;top:408.2px;width:5.6px;height:5.6px;background:#efefef;border-radius:50%;opacity:1"></div>
<svg class="t" style="left:935px;top:431px;" width="1" height="1"><text x="0.96" y="0" font-family="Liberation Sans,sans-serif" font-size="7.2" letter-spacing="0.000" fill="#fff">7</text></svg>
<div style="left:954.01px;top:396.3px;width:28.7px;height:36.6px;background:#555352;"></div>
<div style="left:963.97px;top:407px;width:8px;height:8px;background:#efefef;border-radius:50%;opacity:1"></div>
<svg class="t" style="left:964px;top:431px;" width="1" height="1"><text x="0.19" y="0" font-family="Liberation Sans,sans-serif" font-size="7.2" textLength="7.56" lengthAdjust="spacingAndGlyphs" fill="#fff">10</text></svg>
<div style="left:743.8px;top:434px;width:28.7px;height:36.6px;background:#555352;"></div>
<div style="left:753.3px;top:443.9px;width:9.2px;height:9.2px;background:#efefef;border-radius:50%;opacity:1"></div>
<svg class="t" style="left:754px;top:469px;" width="1" height="1"><text x="0.12" y="0" font-family="Liberation Sans,sans-serif" font-size="7.2" textLength="7.56" lengthAdjust="spacingAndGlyphs" fill="#fff">12</text></svg>
<div style="left:773.83px;top:434px;width:28.7px;height:36.6px;background:#555352;"></div>
<div style="left:782.31px;top:442.9px;width:11.2px;height:11.2px;background:#efefef;border-radius:50%;opacity:1"></div>
<svg class="t" style="left:784px;top:469px;" width="1" height="1"><text x="0.13" y="0" font-family="Liberation Sans,sans-serif" font-size="7.2" textLength="7.56" lengthAdjust="spacingAndGlyphs" fill="#fff">15</text></svg>
<div style="left:803.86px;top:434px;width:28.7px;height:36.6px;background:#555352;"></div>
<div style="left:810.32px;top:440.9px;width:15.2px;height:15.2px;background:#efefef;border-radius:50%;opacity:1"></div>
<svg class="t" style="left:814px;top:469px;" width="1" height="1"><text x="0.14" y="0" font-family="Liberation Sans,sans-serif" font-size="7.2" textLength="7.56" lengthAdjust="spacingAndGlyphs" fill="#fff">20</text></svg>
<div style="left:833.89px;top:434px;width:28.7px;height:36.6px;background:#555352;"></div>
<div style="left:838.83px;top:439.4px;width:18.2px;height:18.2px;background:#efefef;border-radius:50%;opacity:1"></div>
<svg class="t" style="left:844px;top:469px;" width="1" height="1"><text x="0.15" y="0" font-family="Liberation Sans,sans-serif" font-size="7.2" textLength="7.56" lengthAdjust="spacingAndGlyphs" fill="#fff">25</text></svg>
<div style="left:863.92px;top:434px;width:28.7px;height:36.6px;background:#555352;"></div>
<div style="left:868.84px;top:439.4px;width:18.2px;height:18.2px;background:#efefef;border-radius:50%;opacity:1"></div>
<svg class="t" style="left:874px;top:469px;" width="1" height="1"><text x="0.16" y="0" font-family="Liberation Sans,sans-serif" font-size="7.2" textLength="7.56" lengthAdjust="spacingAndGlyphs" fill="#fff">30</text></svg>
<div style="left:893.95px;top:434px;width:28.7px;height:36.6px;background:#555352;"></div>
<div style="left:898.85px;top:439.4px;width:18.2px;height:18.2px;background:#efefef;border-radius:50%;opacity:1"></div>
<svg class="t" style="left:904px;top:469px;" width="1" height="1"><text x="0.17" y="0" font-family="Liberation Sans,sans-serif" font-size="7.2" textLength="7.56" lengthAdjust="spacingAndGlyphs" fill="#fff">40</text></svg>
<div style="left:923.98px;top:434px;width:28.7px;height:36.6px;background:#555352;"></div>
<div style="left:928.86px;top:439.4px;width:18.2px;height:18.2px;background:#efefef;border-radius:50%;opacity:1"></div>
<svg class="t" style="left:934px;top:469px;" width="1" height="1"><text x="0.18" y="0" font-family="Liberation Sans,sans-serif" font-size="7.2" textLength="7.56" lengthAdjust="spacingAndGlyphs" fill="#fff">50</text></svg>
<div style="left:954.01px;top:434px;width:28.7px;height:36.6px;background:#555352;"></div>
<div style="left:958.87px;top:439.4px;width:18.2px;height:18.2px;background:#efefef;border-radius:50%;opacity:1"></div>
<svg class="t" style="left:964px;top:469px;" width="1" height="1"><text x="0.19" y="0" font-family="Liberation Sans,sans-serif" font-size="7.2" textLength="7.56" lengthAdjust="spacingAndGlyphs" fill="#fff">70</text></svg>
<div style="left:743.8px;top:471.8px;width:28.7px;height:36px;background:#555352;"></div>
<div style="left:748.8px;top:477.3px;width:18.2px;height:18.2px;background:#efefef;border-radius:50%;opacity:1"></div>
<svg class="t" style="left:752px;top:506px;" width="1" height="1"><text x="0.34" y="0" font-family="Liberation Sans,sans-serif" font-size="7.2" textLength="11.11" lengthAdjust="spacingAndGlyphs" fill="#fff">100</text></svg>
<div style="left:773.83px;top:471.8px;width:28.7px;height:36px;background:#555352;"></div>
<div style="left:778.81px;top:477.3px;width:18.2px;height:18.2px;background:#efefef;border-radius:50%;opacity:1"></div>
<svg class="t" style="left:782px;top:506px;" width="1" height="1"><text x="0.35" y="0" font-family="Liberation Sans,sans-serif" font-size="7.2" textLength="11.11" lengthAdjust="spacingAndGlyphs" fill="#fff">150</text></svg>
<div style="left:803.86px;top:471.8px;width:28.7px;height:36px;background:#555352;"></div>
<div style="left:808.82px;top:477.3px;width:18.2px;height:18.2px;background:#efefef;border-radius:50%;opacity:1"></div>
<svg class="t" style="left:812px;top:506px;" width="1" height="1"><text x="0.36" y="0" font-family="Liberation Sans,sans-serif" font-size="7.2" textLength="11.11" lengthAdjust="spacingAndGlyphs" fill="#fff">200</text></svg>
<div style="left:833.89px;top:471.8px;width:28.7px;height:36px;background:#555352;"></div>
<div style="left:838.83px;top:477.3px;width:18.2px;height:18.2px;background:#efefef;border-radius:50%;opacity:1"></div>
<svg class="t" style="left:842px;top:506px;" width="1" height="1"><text x="0.37" y="0" font-family="Liberation Sans,sans-serif" font-size="7.2" textLength="11.11" lengthAdjust="spacingAndGlyphs" fill="#fff">300</text></svg>
<div style="left:863.92px;top:471.8px;width:28.7px;height:36px;background:#555352;"></div>
<div style="left:868.84px;top:477.3px;width:18.2px;height:18.2px;background:#efefef;border-radius:50%;opacity:1"></div>
<svg class="t" style="left:872px;top:506px;" width="1" height="1"><text x="0.38" y="0" font-family="Liberation Sans,sans-serif" font-size="7.2" textLength="11.11" lengthAdjust="spacingAndGlyphs" fill="#fff">400</text></svg>
<div style="left:893.95px;top:471.8px;width:28.7px;height:36px;background:#555352;"></div>
<div style="left:898.85px;top:477.3px;width:18.2px;height:18.2px;background:#efefef;border-radius:50%;opacity:1"></div>
<svg class="t" style="left:902px;top:506px;" width="1" height="1"><text x="0.39" y="0" font-family="Liberation Sans,sans-serif" font-size="7.2" textLength="11.11" lengthAdjust="spacingAndGlyphs" fill="#fff">500</text></svg>
<div style="left:923.98px;top:471.8px;width:28.7px;height:36px;background:#555352;"></div>
<div style="left:928.86px;top:477.3px;width:18.2px;height:18.2px;background:#efefef;border-radius:50%;opacity:1"></div>
<svg class="t" style="left:932px;top:506px;" width="1" height="1"><text x="0.4" y="0" font-family="Liberation Sans,sans-serif" font-size="7.2" textLength="11.11" lengthAdjust="spacingAndGlyphs" fill="#fff">700</text></svg>
<div style="left:954.01px;top:471.8px;width:28.7px;height:36px;background:#555352;"></div>
<div style="left:958.87px;top:477.3px;width:18.2px;height:18.2px;background:#efefef;border-radius:50%;opacity:1"></div>
<svg class="t" style="left:960px;top:506px;" width="1" height="1"><text x="0.64" y="0" font-family="Liberation Sans,sans-serif" font-size="7.2" textLength="14.67" lengthAdjust="spacingAndGlyphs" fill="#fff">1000</text></svg>
<div style="left:1008.6px;top:396.3px;width:15.4px;height:134.5px;background:linear-gradient(90deg,#2a2a2a,#3e3e3e 45%,#2c2c2c);"></div>
<div style="left:1008.6px;top:396.3px;width:15.4px;height:8px;background:#2a2a2a;"></div>
<div style="left:1008.6px;top:522.2px;width:15.4px;height:8.6px;background:#2a2a2a;"></div>
<svg style="left:1008.6px;top:396.3px;" width="15.4" height="8" viewBox="0 0 15.4 8"><path d="M4.7 6.500h6l-3-5z" fill="#9a9a9a"/></svg>
<svg style="left:1008.6px;top:522.8px;" width="15.4" height="8" viewBox="0 0 15.4 8"><path d="M4.7 1.500h6l-3 5z" fill="#9a9a9a"/></svg>
<div style="left:1009.2px;top:405px;width:14px;height:116.2px;background:linear-gradient(90deg,#737373,#5e5e5e);border-radius:4.500px"></div>
<div style="left:193px;top:57px;width:550px;height:16px;background:#252525;"></div>
<div style="left:193px;top:70.8px;width:550px;height:3px;background:#1c1c1c;"></div>
<div style="left:194.6px;top:57px;width:272.5px;height:14px;background:linear-gradient(#4b4b4b,#3e3e3e 45%,#343434);border-radius:0 2px 0 0"></div>
<svg class="t" style="left:316px;top:68px;" width="1" height="1"><text x="0.5" y="0" font-family="Liberation Sans,sans-serif" font-size="8.2" letter-spacing="-0.043" fill="#b8b8b8">Untitled</text></svg>
<div style="left:193px;top:73.8px;width:550px;height:457.2px;background:#252525;"></div>
<div style="left:194.2px;top:73.8px;width:530px;height:441.6px;background:#484645;"></div>
<div style="left:195px;top:74px;width:491.1px;height:441.2px;background:#fff;"></div>
<svg style="left:194px;top:73px;" width="546" height="458" viewBox="194 73 546 458"><defs><linearGradient id="sg" gradientUnits="userSpaceOnUse" x1="540.6" y1="411.1" x2="566.2" y2="387.6"><stop offset="0" stop-color="#ff8d7c"/><stop offset=".55" stop-color="#ff8d7c" stop-opacity=".9"/><stop offset="1" stop-color="#ff8d7c" stop-opacity=".3"/></linearGradient></defs><path d="M235.1 318.7L237.2 318.0L239.3 317.4L241.4 316.7L243.4 316.0L245.5 315.3L247.6 314.6L249.6 313.9L251.7 313.3L253.8 312.6L255.8 312.0L257.8 311.4L259.9 310.8L261.9 310.3L264.0 309.8L266.0 309.3L268.0 308.9L270.1 308.6L272.1 308.3L274.2 308.0L276.2 307.8L278.3 307.7L280.3 307.7L282.4 307.7L284.4 307.8L286.4 308.0L288.1 308.3L289.6 308.7L290.8 309.2L291.8 309.9L292.6 310.7L293.2 311.6L293.7 312.8L294.2 314.3L294.5 316.0L294.6 318.0L294.7 320.0L294.7 322.0L294.7 324.0L294.5 326.1L294.3 328.1L294.1 330.1L293.8 332.2L293.4 334.3L293.0 336.4L292.6 338.5L292.1 340.6L291.7 342.7L291.2 344.9L290.7 347.0L290.3 349.2L289.8 351.4L289.4 353.6L289.1 355.9L288.7 358.2L288.5 360.5L288.3 362.8L288.1 365.2L288.1 367.5L288.1 369.9L288.2 372.3L288.4 374.7L288.7 377.0L289.1 379.4L289.5 381.7L290.0 384.0L290.6 386.4L291.3 388.6L292.1 390.9L292.9 393.1L293.8 395.3L294.8 397.5L295.9 399.7L297.2 401.8L298.7 403.9L300.3 405.9L302.2 407.8L304.2 409.5L306.5 411.1L308.8 412.4L311.3 413.5L313.9 414.4L316.5 415.0L319.3 415.4L322.0 415.4L324.7 415.2L327.3 414.7L329.8 414.0L332.3 413.1L334.6 412.0L336.8 410.8L339.0 409.5L341.0 408.2L343.0 406.7L344.9 405.2L346.7 403.6L348.4 401.9L350.1 400.2L351.6 398.4L353.1 396.5L354.6 394.7L356.0 392.8L357.3 390.8L358.5 388.8L359.7 386.8L360.8 384.8L361.9 382.7L363.0 380.7L363.9 378.6L364.9 376.5L365.8 374.4L366.6 372.3L367.5 370.2L368.2 368.1L369.0 366.0L369.7 363.8L370.4 361.7L371.0 359.5L371.6 357.3L372.2 355.2L372.8 353.0L373.3 350.8L373.8 348.7L374.3 346.5L374.8 344.3L375.3 342.1L375.8 340.0L376.2 337.8L376.6 335.6L377.1 333.4L377.5 331.3L377.9 329.1L378.3 327.0L378.8 324.8L379.2 322.6L379.6 320.5L380.0 318.3L380.4 316.2L380.8 314.0L381.2 311.9L381.5 309.7L381.9 307.5L382.3 305.4L382.7 303.2L383.1 301.0L383.4 298.9L383.8 296.7L384.1 294.5L384.5 292.4L384.8 290.2L385.2 288.0L385.5 285.9L385.8 283.7L386.2 281.5L386.5 279.3L386.8 277.2L387.1 275.0L387.4 272.8L387.7 270.6L388.0 268.4L388.3 266.2L388.5 264.0L388.8 261.8L389.1 259.7L389.3 257.5L389.6 255.3L389.9 253.1L390.1 250.9L390.4 248.7L390.7 246.6L390.9 244.4L391.2 242.2L391.5 240.0L391.7 237.9L392.0 235.7L392.3 233.5L392.6 231.4L392.9 229.2L393.2 227.1L393.5 224.9L393.8 222.8L394.1 220.6L394.5 218.5L394.8 216.4L395.2 214.2L395.5 212.1L395.9 210.0L396.3 207.9L396.7 205.8L397.1 203.7L397.5 201.6L398.0 199.5L398.4 197.5L398.9 195.4L399.4 193.3L399.9 191.3L400.5 189.2L401.1 187.2L401.6 185.1L402.2 183.1L402.9 181.1L403.5 179.1L404.2 177.1L405.0 175.1L405.7 173.1L406.5 171.1L407.3 169.1L408.1 167.2L409.0 165.2L409.9 163.2L410.8 161.3L411.8 159.4L412.8 157.5L413.9 155.7L415.0 153.9L416.1 152.1L417.2 150.5L418.5 148.8L419.7 147.3L421.0 145.8L422.3 144.4L423.7 143.1L425.2 141.9L426.7 140.8L428.2 139.8L429.8 138.8L431.5 138.0L433.2 137.3L435.0 136.6L436.9 136.1L438.8 135.7L440.6 135.5L442.5 135.3L444.4 135.3L446.2 135.4L447.9 135.7L449.6 136.1L451.2 136.6L452.7 137.3L454.2 138.1L455.6 139.1L456.9 140.2L458.3 141.5L459.6 143.0L460.9 144.6L462.1 146.2L463.3 148.0L464.5 149.7L465.6 151.5L466.6 153.3L467.6 155.2L468.6 157.0L469.5 158.9L470.3 160.8L471.1 162.7L471.9 164.6L472.6 166.6L473.3 168.5L473.9 170.5L474.5 172.5L475.1 174.5L475.6 176.5L476.1 178.6L476.5 180.6L476.9 182.7L477.3 184.7L477.7 186.8L478.0 188.9L478.3 191.0L478.5 193.1L478.8 195.2L479.0 197.3L479.2 199.5L479.4 201.6L479.5 203.8L479.7 205.9L479.8 208.1L479.9 210.3L480.1 212.5L480.2 214.6L480.3 216.8L480.4 219.0L480.5 221.2L480.6 223.3L480.7 225.5L480.8 227.7L480.8 229.9L480.9 232.1L481.0 234.2L481.0 236.4L481.1 238.6L481.2 240.8L481.2 243.0L481.3 245.2L481.4 247.4L481.4 249.5L481.5 251.7L481.6 253.9L481.6 256.1L481.7 258.3L481.8 260.5L481.8 262.7L481.9 264.9L482.0 267.1L482.1 269.3L482.1 271.5L482.2 273.7L482.3 275.9L482.4 278.1L482.5 280.3L482.7 282.5L482.8 284.7L482.9 286.9L483.0 289.1L483.2 291.3L483.3 293.5L483.5 295.7L483.6 297.9L483.8 300.1L484.0 302.3L484.2 304.5L484.4 306.7L484.5 308.8L484.8 311.0L485.0 313.2L485.2 315.4L485.4 317.6L485.6 319.8L485.9 322.0L486.1 324.2L486.4 326.4L486.6 328.6L486.9 330.8L487.2 333.0L487.5 335.2L487.8 337.4L488.1 339.5L488.4 341.7L488.7 343.9L489.0 346.1L489.4 348.3L489.7 350.5L490.0 352.6L490.4 354.8L490.8 357.0L491.1 359.2L491.5 361.4L491.9 363.5L492.3 365.7L492.7 367.9L493.1 370.0L493.5 372.2L494.0 374.4L494.4 376.5L494.9 378.7L495.3 380.9L495.8 383.1L496.3 385.3L496.9 387.5L497.5 389.7L498.2 391.9L498.9 394.1L499.7 396.3L500.6 398.5L501.6 400.7L502.7 402.9L504.0 405.1L505.3 407.2L506.9 409.3L508.6 411.3L510.5 413.2L512.7 414.9L515.0 416.3L517.4 417.4L520.0 418.3L522.6 418.9L525.2 419.2L527.8 419.4L530.5 419.2L533.1 418.8L535.6 418.2L538.1 417.4L540.4 416.4L542.6 415.3L538.5 407.0L536.7 407.7L534.9 408.3L533.2 408.8L531.4 409.1L529.6 409.3L527.8 409.4L526.0 409.3L524.3 409.1L522.7 408.7L521.2 408.2L519.7 407.5L518.4 406.7L517.1 405.7L515.9 404.5L514.7 403.1L513.6 401.5L512.5 399.9L511.5 398.1L510.6 396.4L509.8 394.6L509.0 392.7L508.3 390.8L507.7 388.9L507.1 386.9L506.5 384.9L506.0 382.9L505.5 380.9L505.1 378.8L504.6 376.7L504.2 374.5L503.8 372.4L503.3 370.3L502.9 368.2L502.5 366.0L502.1 363.9L501.7 361.8L501.4 359.6L501.0 357.5L500.6 355.3L500.3 353.2L499.9 351.1L499.6 348.9L499.2 346.8L498.9 344.6L498.6 342.5L498.3 340.3L498.0 338.2L497.7 336.0L497.4 333.9L497.1 331.7L496.8 329.5L496.6 327.4L496.3 325.2L496.1 323.1L495.8 320.9L495.6 318.8L495.4 316.6L495.1 314.4L494.9 312.3L494.7 310.1L494.5 307.9L494.3 305.8L494.1 303.6L493.9 301.4L493.8 299.3L493.6 297.1L493.5 294.9L493.3 292.8L493.2 290.6L493.0 288.4L492.9 286.3L492.8 284.1L492.6 281.9L492.5 279.8L492.4 277.6L492.3 275.4L492.2 273.2L492.1 271.1L492.1 268.9L492.0 266.7L491.9 264.5L491.8 262.4L491.8 260.2L491.7 258.0L491.6 255.8L491.6 253.6L491.5 251.4L491.4 249.3L491.4 247.1L491.3 244.9L491.2 242.7L491.2 240.5L491.1 238.3L491.0 236.1L491.0 233.9L490.9 231.7L490.8 229.5L490.7 227.3L490.7 225.1L490.6 222.9L490.5 220.7L490.4 218.5L490.3 216.3L490.2 214.1L490.1 211.9L489.9 209.7L489.8 207.5L489.7 205.3L489.5 203.1L489.3 200.8L489.1 198.6L488.9 196.4L488.7 194.1L488.5 191.9L488.2 189.7L487.9 187.5L487.5 185.2L487.2 183.0L486.8 180.8L486.3 178.5L485.8 176.3L485.3 174.1L484.7 171.9L484.1 169.7L483.5 167.5L482.8 165.4L482.0 163.2L481.2 161.1L480.4 158.9L479.5 156.8L478.5 154.7L477.5 152.6L476.5 150.5L475.3 148.5L474.2 146.4L472.9 144.4L471.6 142.4L470.2 140.4L468.8 138.4L467.2 136.5L465.5 134.6L463.6 132.8L461.7 131.2L459.5 129.7L457.2 128.4L454.8 127.3L452.3 126.5L449.8 125.9L447.3 125.5L444.7 125.3L442.1 125.3L439.6 125.5L437.0 125.9L434.5 126.4L432.1 127.1L429.7 127.9L427.3 128.9L425.1 130.0L422.9 131.3L420.9 132.6L418.9 134.1L417.1 135.7L415.3 137.3L413.7 139.0L412.1 140.8L410.6 142.7L409.1 144.6L407.8 146.6L406.5 148.6L405.2 150.6L404.1 152.7L403.0 154.8L401.9 156.9L400.9 159.0L399.9 161.1L399.0 163.2L398.1 165.3L397.2 167.4L396.4 169.5L395.6 171.6L394.8 173.8L394.1 175.9L393.4 178.0L392.7 180.2L392.0 182.3L391.4 184.5L390.8 186.6L390.3 188.8L389.7 190.9L389.2 193.1L388.7 195.2L388.2 197.4L387.7 199.6L387.3 201.7L386.9 203.9L386.5 206.1L386.1 208.2L385.7 210.4L385.3 212.6L384.9 214.8L384.6 216.9L384.2 219.1L383.9 221.3L383.6 223.5L383.3 225.7L383.0 227.9L382.7 230.1L382.4 232.2L382.1 234.4L381.8 236.6L381.5 238.8L381.3 241.0L381.0 243.2L380.7 245.4L380.5 247.5L380.2 249.7L379.9 251.9L379.7 254.1L379.4 256.3L379.1 258.4L378.9 260.6L378.6 262.8L378.3 265.0L378.1 267.1L377.8 269.3L377.5 271.4L377.2 273.6L376.9 275.8L376.6 277.9L376.3 280.1L375.9 282.2L375.6 284.4L375.3 286.5L375.0 288.6L374.6 290.8L374.3 292.9L373.9 295.1L373.6 297.2L373.2 299.4L372.8 301.5L372.5 303.7L372.1 305.8L371.7 307.9L371.3 310.1L370.9 312.2L370.5 314.4L370.1 316.5L369.7 318.6L369.3 320.8L368.9 322.9L368.5 325.1L368.1 327.2L367.7 329.4L367.3 331.5L366.8 333.7L366.4 335.8L366.0 337.9L365.5 340.0L365.1 342.2L364.6 344.3L364.1 346.4L363.6 348.5L363.1 350.5L362.5 352.6L362.0 354.7L361.4 356.7L360.8 358.7L360.2 360.7L359.5 362.7L358.8 364.7L358.1 366.7L357.3 368.7L356.5 370.6L355.7 372.5L354.9 374.4L354.0 376.3L353.0 378.2L352.1 380.0L351.0 381.8L350.0 383.6L348.9 385.3L347.7 387.0L346.6 388.7L345.3 390.3L344.0 391.9L342.7 393.4L341.3 394.8L339.9 396.2L338.4 397.6L336.9 398.8L335.3 400.0L333.6 401.1L331.9 402.1L330.2 403.0L328.4 403.8L326.7 404.5L325.0 405.0L323.3 405.3L321.6 405.5L320.0 405.4L318.3 405.2L316.7 404.8L315.0 404.2L313.4 403.5L311.8 402.6L310.3 401.6L309.0 400.5L307.8 399.2L306.6 397.9L305.6 396.4L304.7 394.8L303.8 393.1L303.0 391.3L302.2 389.5L301.5 387.6L300.8 385.6L300.3 383.7L299.7 381.7L299.3 379.7L298.9 377.7L298.6 375.7L298.4 373.6L298.2 371.6L298.1 369.6L298.1 367.6L298.1 365.5L298.2 363.5L298.4 361.5L298.6 359.5L298.9 357.4L299.3 355.4L299.7 353.3L300.1 351.2L300.5 349.1L301.0 347.0L301.4 344.8L301.9 342.7L302.4 340.5L302.8 338.3L303.2 336.1L303.6 333.8L304.0 331.5L304.3 329.2L304.5 326.9L304.7 324.5L304.7 322.1L304.7 319.7L304.6 317.3L304.4 314.7L303.9 312.1L303.2 309.4L302.0 306.8L300.3 304.3L298.1 302.2L295.7 300.5L293.1 299.3L290.3 298.5L287.7 298.1L285.1 297.8L282.7 297.7L280.3 297.7L277.9 297.7L275.5 297.9L273.1 298.1L270.8 298.3L268.5 298.7L266.2 299.1L263.9 299.5L261.7 300.0L259.5 300.6L257.3 301.2L255.1 301.8L252.9 302.4L250.8 303.1L248.6 303.7L246.5 304.4L244.4 305.1L242.3 305.8L240.3 306.5L238.2 307.2L236.2 307.9L234.1 308.5L232.1 309.2A5.0 5.0 0 0 0 235.1 318.7Z" fill="#ff8d7c"/><path d="M540.4 416.4L542.6 415.3L544.8 414.0L546.8 412.6L548.7 411.2L550.5 409.7L552.3 408.2L554.0 406.6L555.6 405.0L557.2 403.3L558.7 401.6L560.1 399.8L561.5 398.1L562.8 396.2L564.1 394.4L565.4 392.5L566.6 390.6L567.7 388.6L564.8 386.5L563.3 388.1L561.8 389.7L560.3 391.2L558.8 392.7L557.2 394.2L555.7 395.6L554.1 396.9L552.4 398.3L550.8 399.5L549.1 400.8L547.4 402.0L545.6 403.1L543.9 404.2L542.1 405.2L540.3 406.2L538.5 407.0L536.7 407.7Z" fill="url(#sg)"/></svg>
<div style="left:724.2px;top:73.6px;width:15.6px;height:441.6px;background:linear-gradient(90deg,#404040,#383838 50%,#303030);"></div>
<div style="left:724.2px;top:73.6px;width:15.6px;height:8.4px;background:#2a2c2e;"></div>
<div style="left:724.2px;top:504.4px;width:15.6px;height:10.8px;background:#2a2a2a;"></div>
<div style="left:725px;top:238px;width:13.2px;height:98.4px;background:linear-gradient(90deg,#7a7a7a,#646464);border-radius:4.500px"></div>
<svg style="left:728.4px;top:75.6px;" width="6.4" height="5" viewBox="0 0 6.4 5"><path d="M0 4.800h6.400L3.200 0z" fill="#b4b4b4"/></svg>
<svg style="left:728.4px;top:509px;" width="6.4" height="5" viewBox="0 0 6.4 5"><path d="M0 .2h6.400L3.200 4.800z" fill="#b4b4b4"/></svg>
<div style="left:194px;top:515.4px;width:544px;height:14.2px;background:linear-gradient(#404040,#353535 40%,#2a2a2a);"></div>
<div style="left:194px;top:515.4px;width:9.6px;height:14.2px;background:#2a2a2a;"></div>
<div style="left:730.6px;top:515.4px;width:7.4px;height:14.2px;background:#262626;"></div>
<svg style="left:196.4px;top:519.8px;" width="4.6" height="6.2" viewBox="0 0 4.6 6.2"><path d="M4.600 0v6.200L0 3.100z" fill="#b4b4b4"/></svg>
<svg style="left:732.6px;top:519.8px;" width="4.6" height="6.2" viewBox="0 0 4.6 6.2"><path d="M0 0v6.200l4.600-3.100z" fill="#c4c4c4"/></svg>
<div style="left:427px;top:516.2px;width:125px;height:12.8px;background:linear-gradient(#727272,#5e5e5e);border-radius:4.500px"></div>
<div style="left:194px;top:529.9px;width:545px;height:0.9px;background:#4a4a4a;"></div>
<div style="left:739.8px;top:73px;width:3.4px;height:458px;background:#262626;"></div>
<div style="left:0px;top:530.8px;width:1024px;height:15px;background:#252525;"></div>
<svg class="t" style="left:4px;top:542px;" width="1" height="1"><text x="0.75" y="0" font-family="Liberation Sans,sans-serif" font-size="8.8" textLength="64.65" lengthAdjust="spacingAndGlyphs" fill="#d0d0d0">2600 * 2200 pixel</text></svg>
<svg class="t" style="left:76px;top:542px;" width="1" height="1"><text x="0.5" y="0" font-family="Liberation Sans,sans-serif" font-size="8.8" letter-spacing="-0.025" fill="#d0d0d0">(11 * 9.3cm)</text></svg>
<svg class="t" style="left:130px;top:542px;" width="1" height="1"><text x="0.5" y="0" font-family="Liberation Sans,sans-serif" font-size="8.8" letter-spacing="-0.062" fill="#d0d0d0">600 dpi</text></svg>
<svg class="t" style="left:165px;top:542px;" width="1" height="1"><text x="0.9" y="0" font-family="Liberation Sans,sans-serif" font-size="8.8" textLength="18.1" lengthAdjust="spacingAndGlyphs" fill="#d0d0d0">33 %</text></svg>
<svg class="t" style="left:191px;top:542px;" width="1" height="1"><text x="0.5" y="0" font-family="Liberation Sans,sans-serif" font-size="8.8" textLength="51" lengthAdjust="spacingAndGlyphs" fill="#d0d0d0">( 1757, 1792 )</text></svg>
<svg class="t" style="left:248px;top:542px;" width="1" height="1"><text x="0.75" y="0" font-family="Liberation Sans,sans-serif" font-size="8.8" letter-spacing="0.048" fill="#d0d0d0">Vẽ một đường thẳng bằng cách giữ phím Shift, Thay đổi cỡ cọ bằng cách giữ phím Ctrl, Alt và kéo</text></svg>
<div style="left:0px;top:545.7px;width:1024px;height:30.3px;background:linear-gradient(90deg,#e6e6e4 0,#e8e6e4 14%,#ecdcdc 22%,#f0e6e6 32%,#ebd9e0 39%,#efe3e3 46%,#ecdcde 53%,#e6d6ea 58.500%,#eedcde 66%,#eee4e2 76%,#ebe7e3 88%,#e9e7e3 100%);"></div>
<div style="left:148px;top:545.7px;width:37px;height:30.3px;background:rgba(255,255,255,.45);"></div>
<div style="left:185px;top:545.7px;width:36px;height:30.3px;background:linear-gradient(#f9ab72,#f7a263);"></div>
<div style="left:185px;top:574.4px;width:36px;height:1.6px;background:#f2730c;"></div>
<div style="left:114.6px;top:574.6px;width:30px;height:1.4px;background:#2aa4c6;"></div>
<div style="left:148.6px;top:574.6px;width:35.6px;height:1.4px;background:#2aa4c6;"></div>
<svg style="left:12px;top:555px;" width="12.2" height="12.2" viewBox="0 0 12.2 12.2"><path d="M0 1.700L5.500.9v4.900H0zM6.300.8L12.200 0v5.800H6.300zM0 6.500h5.500v4.900L0 10.600zM6.300 6.500h5.900v5.700l-5.900-.8z" fill="#111"/></svg>
<svg style="left:46.9px;top:552px;" width="18.2" height="18.2" viewBox="0 0 18.2 18.2"><defs><linearGradient id="ed1" x1="0" y1="0" x2="1" y2="1"><stop offset="0" stop-color="#2bc3d2"/><stop offset=".5" stop-color="#1b8fd8"/><stop offset="1" stop-color="#0c59a4"/></linearGradient><linearGradient id="ed2" x1="0" y1="1" x2="1" y2="0"><stop offset="0" stop-color="#1f9ad6"/><stop offset="1" stop-color="#5fd65a"/></linearGradient></defs><circle cx="9.100" cy="9.100" r="9" fill="url(#ed1)"/><path d="M1 7.500C2.500 2 8 .2 12.500 1.600c4 1.300 5.600 5 5.200 8.200c-.4 2-2.200 2.800-4.200 2.600c-2-.2-2.600-1.600-2-3c-1-2.400-4.600-3-7-1.600C3 8.600 1.800 9.600 1 11z" fill="url(#ed2)"/><path d="M11.400 9.400c-1.400-2-4.800-1.400-5.400 1c-.6 2.600 1.600 5.400 5.200 5.600c2.200.1 4-.8 5.200-2.200c-3.400 1.400-6.600-.8-5-4.400z" fill="#eef6fb"/></svg>
<svg style="left:84.4px;top:554.2px;" width="17" height="14" viewBox="0 0 17 14"><path d="M0 1.600C0 .8.400.4 1.200.4h4.600l1.600 1.600h8.400c.8 0 1.200.4 1.200 1.200v9.600c0 .8-.4 1.200-1.200 1.200H1.200c-.8 0-1.200-.4-1.200-1.200z" fill="#f9c13a"/><path d="M0 4.400h17v8.400c0 .8-.4 1.200-1.200 1.200H1.200c-.8 0-1.200-.4-1.200-1.200z" fill="#fbd45c"/><path d="M4.200 14V9.800c0-.6.400-1 1-1h6.600c.6 0 1 .4 1 1V14h-2.600v-2.600H6.800V14z" fill="#2f7fd6"/><rect x="1" y="0" width="4.600" height="1.400" rx=".5" fill="#e8a317"/></svg>
<svg style="left:122.4px;top:553.2px;" width="15" height="15" viewBox="0 0 15 15"><circle cx="7.200" cy="7.800" r="7" fill="#7cc242"/><circle cx="7.200" cy="7.800" r="3.400" stroke="#eaf6d8" stroke-width="1.300" fill="none"/><circle cx="7.200" cy="7.800" r="1.300" fill="#eaf6d8"/><path d="M7.200 7.800L14.500 .2L15 7z" fill="#f0f0ee"/><path d="M10.600 4l2-2.400M11.800 5.400l2.600-1.200" stroke="#e0523a" stroke-width="1"/><path d="M8.600 2.400l.6-2" stroke="#e0523a" stroke-width="1"/></svg>
<svg style="left:160.2px;top:553.8px;" width="12.8" height="13" viewBox="0 0 12.8 13"><circle cx="6.300" cy="7" r="5.800" fill="#1fb6a6"/><path d="M6.300 1.200c2-1.600 4.400-.6 5 .6c1 2 1 4.600.4 6.400L6.300 7z" fill="#f0903a"/><path d="M.6 6C.8 3.600 3 1.200 6.300 1.200L6.300 7z" fill="#e8503e"/><path d="M1 9.600C2.200 12 5 13.200 8 12.400C5 11 3 9 2.600 6.600z" fill="#2e8fd8"/><circle cx="6.600" cy="7.600" r="2.400" fill="#27c2a8"/></svg>
<svg style="left:194px;top:552px;" width="18" height="18.2" viewBox="0 0 18 18.2"><path d="M2 3.600c4-3.600 10-4 14-.6c2 2.600 2 8 .4 12.400H1.200C0 11 .2 6.400 2 3.600z" fill="#1f9a34"/><path d="M3.400 8.600C5.400 3 11.600 1.600 15 5.400c1.600 2.600 1.200 6.400-.8 8.600z" fill="#bfe88a"/><path d="M3 9.400c3.600.2 8.600 2 12 5.200l-1.200 1.200C10 13.600 6 12 2.400 11.600z" fill="#8a5a32"/><path d="M1.200 12.600c3.400 0 8 1.200 12 3.800H1.600z" fill="#176f2a"/><path d="M14 7.600c1.400 1.400 1.600 4 .6 5.800" stroke="#e4572e" stroke-width="1.300" fill="none"/></svg>
<svg style="left:791px;top:557.8px;" width="9.2" height="6" viewBox="0 0 9.2 6"><path d="M.5 5.400L4.600 1.200L8.700 5.400" stroke="#1c1c1c" fill="none" stroke-width="1.100"/></svg>
<svg style="left:814px;top:558.2px;" width="12" height="7" viewBox="0 0 12 7"><rect x=".5" y=".5" width="10" height="5.700" stroke="#1c1c1c" fill="none" stroke-width="1"/><rect x="1.800" y="1.800" width="4.600" height="3.100" fill="#111"/><path d="M11.200 2.400v2" stroke="#1c1c1c" stroke-width="1"/></svg>
<svg style="left:839.4px;top:556.8px;" width="10.4" height="9.6" viewBox="0 0 10.4 9.6"><path d="M.8 9C1 4.400 4.400 1 9.400.8M3.200 9c.2-3.200 2.600-5.600 6-5.800M5.600 9c.2-2 1.600-3.400 3.600-3.600" stroke="#444" stroke-width="1.100" fill="none"/><circle cx="8.600" cy="8.400" r="1" fill="#222"/></svg>
<svg style="left:861px;top:557px;" width="11.6" height="9.2" viewBox="0 0 11.6 9.2"><path d="M.6 3.200h2l2.800-2.600v8l-2.800-2.600h-2z" stroke="#1c1c1c" fill="none" stroke-width="1"/><path d="M7 3.200c.8.800.8 2 0 2.800" stroke="#1c1c1c" fill="none" stroke-width=".9"/><path d="M8.600 1.600c1.800 1.800 1.800 4.200 0 6" stroke="#999" stroke-width=".8" fill="none"/></svg>
<svg style="left:886.6px;top:556.6px;" width="11" height="10.4" viewBox="0 0 11 10.4"><path d="M2.600 9.800c-1.600.4-2.600-1.400-1.200-2.600c1-1 2.400-.4 2.200.8c-.2 1-1 1.800-1 1.800zM3.400 8.200L7.200 1.400c.8-1.200 2.400-.4 1.800.8L6 8M6.400 6.200c1.400-1.400 3.200-.8 3.400.4" stroke="#1c1c1c" fill="none" stroke-width="1.100"/></svg>
<svg class="t" style="left:914px;top:564px;" width="1" height="1"><text x="0.1" y="0" font-family="Liberation Sans,sans-serif" font-size="9.6" textLength="17" lengthAdjust="spacingAndGlyphs" fill="#111">ENG</text></svg>
<svg class="t" style="left:944px;top:557px;" width="1" height="1"><text x="0.75" y="0" font-family="Liberation Sans,sans-serif" font-size="9.2" textLength="31" lengthAdjust="spacingAndGlyphs" fill="#111">5:09 PM</text></svg>
<svg class="t" style="left:943px;top:571px;" width="1" height="1"><text x="0.25" y="0" font-family="Liberation Sans,sans-serif" font-size="9.2" textLength="33.4" lengthAdjust="spacingAndGlyphs" fill="#111">8/1/2021</text></svg>
<svg style="left:993px;top:555px;" width="17" height="17" viewBox="0 0 17 17"><path d="M.4 .4h11.400v8.200H7.600L5 11V8.600H.4z" fill="#111"/><path d="M2.400 2.800h7.400M2.400 4.600h7.400M2.400 6.400h5" stroke="#e8e8e8" stroke-width=".8"/><circle cx="11.700" cy="11.400" r="4.600" fill="#dcdcdc" stroke="#555" stroke-width=".7"/><text x="11.700" y="13.800" font-family="Liberation Sans,sans-serif" font-size="6.600" fill="#111" text-anchor="middle" letter-spacing="-.4">11</text></svg>
<div style="left:1020.5px;top:545.7px;width:0.8px;height:30.3px;background:#9a9a9a;"></div>
</body></html>
